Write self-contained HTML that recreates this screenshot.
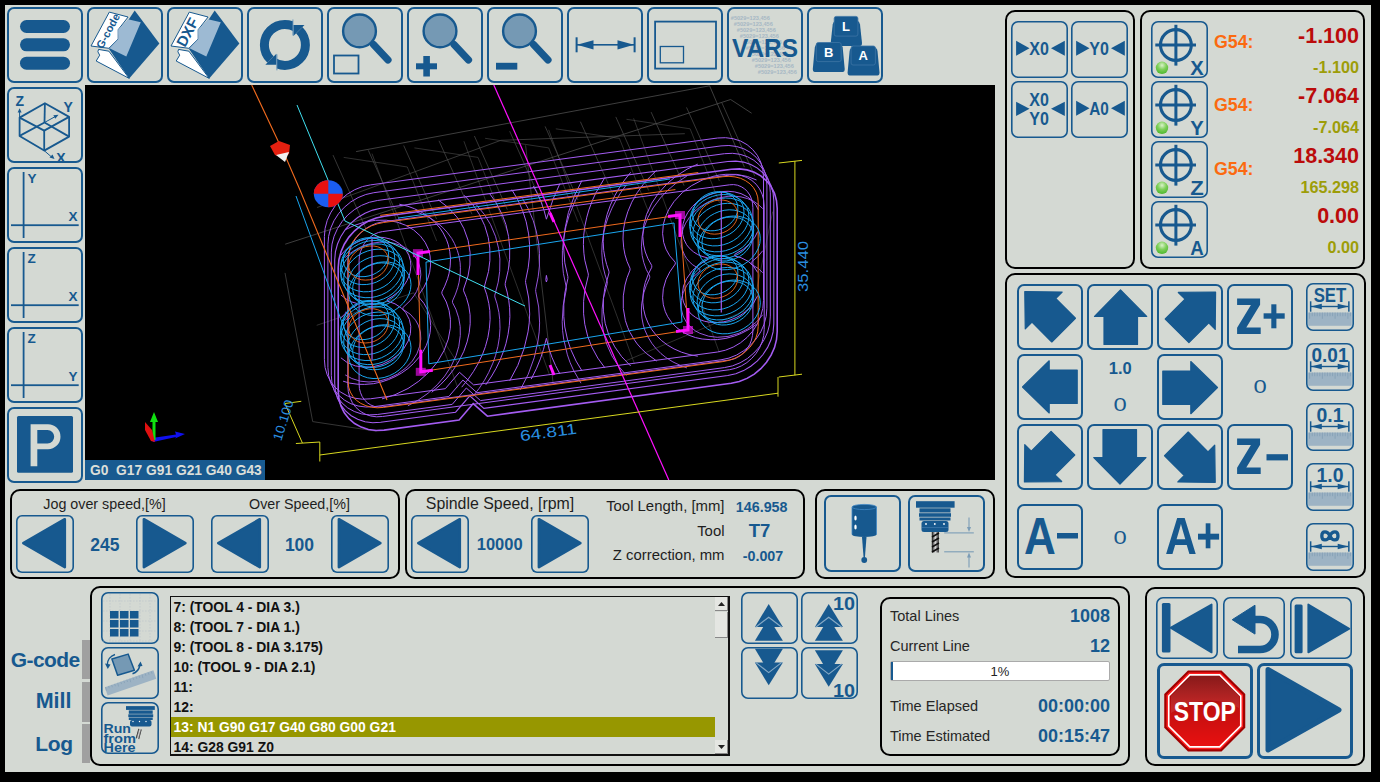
<!DOCTYPE html>
<html><head><meta charset="utf-8"><style>
html,body{margin:0;padding:0;background:#000;width:1380px;height:782px;overflow:hidden}
#main{position:absolute;left:5px;top:5px;width:1366px;height:767px;background:#d4d9d3;overflow:hidden}
#root{position:absolute;left:0;top:0;width:1380px;height:782px;font-family:"Liberation Sans",sans-serif}
.b{position:absolute;box-sizing:border-box;border:2px solid #17598f;border-radius:7px}
.t1{border:none;box-shadow:inset 0 0 0 1.6px #17598f}
.p{position:absolute;box-sizing:border-box;border:2px solid #000;border-radius:10px}
.t{position:absolute;white-space:nowrap}
#vp{position:absolute;left:85px;top:85px;width:910px;height:395px;background:#000}
svg{position:absolute;overflow:visible}
</style></head><body>
<div id="main"></div>
<div id="root">
<div class="b" style="left:7px;top:7px;width:76px;height:76px;"></div>
<div class="b" style="left:87px;top:7px;width:76px;height:76px;"></div>
<div class="b" style="left:167px;top:7px;width:76px;height:76px;"></div>
<div class="b" style="left:247px;top:7px;width:76px;height:76px;"></div>
<div class="b" style="left:327px;top:7px;width:76px;height:76px;"></div>
<div class="b" style="left:407px;top:7px;width:76px;height:76px;"></div>
<div class="b" style="left:487px;top:7px;width:76px;height:76px;"></div>
<div class="b" style="left:567px;top:7px;width:76px;height:76px;"></div>
<div class="b" style="left:647px;top:7px;width:76px;height:76px;"></div>
<div class="b" style="left:727px;top:7px;width:76px;height:76px;"></div>
<div class="b" style="left:807px;top:7px;width:76px;height:76px;"></div>
<div class="b" style="left:7px;top:87px;width:76px;height:76px;"></div>
<div class="b" style="left:7px;top:167px;width:76px;height:76px;"></div>
<div class="b" style="left:7px;top:247px;width:76px;height:76px;"></div>
<div class="b" style="left:7px;top:327px;width:76px;height:76px;"></div>
<div class="b" style="left:7px;top:407px;width:76px;height:76px;"></div>
<svg style="left:7px;top:7px;" width="76" height="76" viewBox="0 0 76 76"><g fill="#17598f"><rect x="13" y="13" width="50" height="13" rx="6.5"/><rect x="13" y="31.3" width="50" height="13" rx="6.5"/><rect x="13" y="49.7" width="50" height="13" rx="6.5"/></g></svg>
<svg style="left:86px;top:7px;" width="76" height="76" viewBox="0 0 76 76"><polygon points="48.7,3.6 73.4,36.6 43.2,71.4 23,41.9" fill="#17598f"/><polygon points="10.2,54 13.7,48.2 11.9,44.8 12.5,42.4 22.9,44.2 43.2,71.4" fill="#fff" stroke="#17598f" stroke-width="1"/><polygon points="5,39 23.3,5.1 42.1,10 32.2,22.7 32.2,32 22.9,41.3" fill="#fff" stroke="#17598f" stroke-width="1"/><polygon points="42,12.3 54.8,15.2 40.3,49.4 23.5,41.3 32.2,32 32.2,22.7" fill="#9dbad3"/><text x="16.5" y="42.5" transform="rotate(-62 16.5 42.5)" font-family="Liberation Sans" font-weight="bold" font-size="11" fill="#17598f">G-code</text></svg>
<svg style="left:166px;top:7px;" width="76" height="76" viewBox="0 0 76 76"><polygon points="48.7,3.6 73.4,36.6 43.2,71.4 23,41.9" fill="#17598f"/><polygon points="10.2,54 13.7,48.2 11.9,44.8 12.5,42.4 22.9,44.2 43.2,71.4" fill="#fff" stroke="#17598f" stroke-width="1"/><polygon points="5,39 23.3,5.1 42.1,10 32.2,22.7 32.2,32 22.9,41.3" fill="#fff" stroke="#17598f" stroke-width="1"/><polygon points="42,12.3 54.8,15.2 40.3,49.4 23.5,41.3 32.2,32 32.2,22.7" fill="#9dbad3"/><text x="19" y="41" transform="rotate(-62 19 41)" font-family="Liberation Sans" font-weight="bold" font-size="15" fill="#17598f">DXF</text></svg>
<svg style="left:247px;top:7px;" width="76" height="76" viewBox="0 0 76 76"><defs><clipPath id="cl"><polygon points="-10,-10 46,-10 46,37.9 38.2,37.9 -10,86.1"/></clipPath><clipPath id="cr"><polygon points="85.5,-10 100,-10 100,100 29.8,100 29.8,37.9 46,37.9 46,29.5"/></clipPath></defs><circle cx="37.9" cy="37.9" r="20.5" fill="none" stroke="#17598f" stroke-width="9" clip-path="url(#cl)"/><circle cx="37.9" cy="37.9" r="20.5" fill="none" stroke="#17598f" stroke-width="9" clip-path="url(#cr)"/><polygon points="46.4,18 57.5,18 46.4,29.1" fill="#17598f"/><polygon points="29.4,57.8 18.3,57.8 29.4,46.7" fill="#17598f"/><line x1="45.9" y1="12.5" x2="45.9" y2="28.5" stroke="#5f8fb8" stroke-width="0.9"/><line x1="29.9" y1="47.3" x2="29.9" y2="63.3" stroke="#5f8fb8" stroke-width="0.9"/></svg>
<svg style="left:327px;top:7px;" width="76" height="76" viewBox="0 0 76 76"><circle cx="32.5" cy="23.9" r="16.4" fill="#7599b4" stroke="#17598f" stroke-width="2.4"/><line x1="46.5" y1="37.599999999999994" x2="61.0" y2="52.9" stroke="#17598f" stroke-width="7.2" stroke-linecap="round"/><rect x="7" y="48.5" width="24.5" height="18" fill="none" stroke="#17598f" stroke-width="1.8"/></svg>
<svg style="left:407px;top:7px;" width="76" height="76" viewBox="0 0 76 76"><circle cx="33" cy="23.9" r="16.4" fill="#7599b4" stroke="#17598f" stroke-width="2.4"/><line x1="47" y1="37.599999999999994" x2="61.5" y2="52.9" stroke="#17598f" stroke-width="7.2" stroke-linecap="round"/><rect x="9" y="56.3" width="21" height="6" fill="#17598f"/><rect x="16.3" y="49" width="6.6" height="20.5" fill="#17598f"/></svg>
<svg style="left:487px;top:7px;" width="76" height="76" viewBox="0 0 76 76"><circle cx="32.5" cy="23.9" r="16.4" fill="#7599b4" stroke="#17598f" stroke-width="2.4"/><line x1="46.5" y1="37.599999999999994" x2="61.0" y2="52.9" stroke="#17598f" stroke-width="7.2" stroke-linecap="round"/><rect x="9" y="55.8" width="21.3" height="6.8" fill="#17598f"/></svg>
<svg style="left:567px;top:7px;" width="76" height="76" viewBox="0 0 76 76"><g fill="#17598f"><rect x="8.6" y="30.3" width="2" height="15"/><rect x="66.6" y="30.3" width="2" height="15"/><rect x="10" y="37" width="57" height="1.6"/><polygon points="10,37.8 26.5,33.2 26.5,42.4"/><polygon points="67,37.8 50.5,33.2 50.5,42.4"/></g></svg>
<svg style="left:647px;top:7px;" width="76" height="76" viewBox="0 0 76 76"><rect x="8.1" y="14.6" width="60.9" height="47" fill="none" stroke="#17598f" stroke-width="1.8"/><rect x="13.3" y="39.5" width="23.2" height="16.3" fill="none" stroke="#17598f" stroke-width="1.3"/></svg>
<svg style="left:727px;top:7px;" width="76" height="76" viewBox="0 0 76 76"><text x="3.8" y="12.5" font-size="6" font-weight="bold" fill="#a6b7c4" font-family="Liberation Sans" textLength="39" lengthAdjust="spacingAndGlyphs">#5029=123,456</text><text x="6.8" y="18.55" font-size="6" font-weight="bold" fill="#a6b7c4" font-family="Liberation Sans" textLength="39" lengthAdjust="spacingAndGlyphs">#5029=123,456</text><text x="9.8" y="24.6" font-size="6" font-weight="bold" fill="#a6b7c4" font-family="Liberation Sans" textLength="39" lengthAdjust="spacingAndGlyphs">#5029=123,456</text><text x="12.8" y="30.65" font-size="6" font-weight="bold" fill="#a6b7c4" font-family="Liberation Sans" textLength="39" lengthAdjust="spacingAndGlyphs">#5029=123,456</text><text x="15.8" y="36.7" font-size="6" font-weight="bold" fill="#a6b7c4" font-family="Liberation Sans" textLength="39" lengthAdjust="spacingAndGlyphs">#5029=123,456</text><text x="18.8" y="42.75" font-size="6" font-weight="bold" fill="#a6b7c4" font-family="Liberation Sans" textLength="39" lengthAdjust="spacingAndGlyphs">#5029=123,456</text><text x="21.8" y="48.8" font-size="6" font-weight="bold" fill="#a6b7c4" font-family="Liberation Sans" textLength="39" lengthAdjust="spacingAndGlyphs">#5029=123,456</text><text x="24.8" y="54.85" font-size="6" font-weight="bold" fill="#a6b7c4" font-family="Liberation Sans" textLength="39" lengthAdjust="spacingAndGlyphs">#5029=123,456</text><text x="27.8" y="60.9" font-size="6" font-weight="bold" fill="#a6b7c4" font-family="Liberation Sans" textLength="39" lengthAdjust="spacingAndGlyphs">#5029=123,456</text><text x="30.8" y="66.94999999999999" font-size="6" font-weight="bold" fill="#a6b7c4" font-family="Liberation Sans" textLength="39" lengthAdjust="spacingAndGlyphs">#5029=123,456</text><text x="38" y="50" text-anchor="middle" font-family="Liberation Sans" font-weight="bold" font-size="25" fill="#17598f" textLength="66" lengthAdjust="spacingAndGlyphs">VARS</text></svg>
<svg style="left:807px;top:7px;" width="76" height="76" viewBox="0 0 76 76"><path d="M25.7,39 L53,39 Q55,39 55,36 L53,17.4 Q52,13.4 49,13.4 L29.7,13.4 Q26.7,13.4 25.7,17.4 L23.7,36 Q23.7,39 25.7,39 Z" fill="#17598f"/><rect x="27.2" y="9.4" width="23.7" height="19.700000000000003" rx="2" fill="#17598f" stroke="#3d75a5" stroke-width="0.8"/><text x="39.05" y="23.75" text-anchor="middle" font-family="Liberation Sans" font-weight="bold" font-size="13" fill="#fff">L</text><path d="M7.8,65 L35.7,65 Q37.7,65 37.7,62 L35.7,40.6 Q34.7,36.6 31.700000000000003,36.6 L11.8,36.6 Q8.8,36.6 7.8,40.6 L5.8,62 Q5.8,65 7.8,65 Z" fill="#17598f"/><rect x="9.3" y="35.5" width="24.900000000000002" height="19.1" rx="2" fill="#17598f" stroke="#3d75a5" stroke-width="0.8"/><text x="21.75" y="49.55" text-anchor="middle" font-family="Liberation Sans" font-weight="bold" font-size="13" fill="#fff">B</text><path d="M42.6,68.5 L70.5,68.5 Q72.5,68.5 72.5,65.5 L70.5,44.1 Q69.5,40.1 66.5,40.1 L46.6,40.1 Q43.6,40.1 42.6,44.1 L40.6,65.5 Q40.6,68.5 42.6,68.5 Z" fill="#17598f"/><rect x="44.1" y="39" width="24.300000000000004" height="19" rx="2" fill="#17598f" stroke="#3d75a5" stroke-width="0.8"/><text x="56.25" y="53.0" text-anchor="middle" font-family="Liberation Sans" font-weight="bold" font-size="13" fill="#fff">A</text></svg>
<svg style="left:7px;top:87px;" width="76" height="76" viewBox="0 0 76 76"><g fill="none" stroke="#17598f" stroke-width="1.8" stroke-linejoin="round"><polygon points="37.9,16.2 62.1,29.9 62.1,49.6 37.2,63.6 12.6,48.9 12.6,30.6"/><polyline points="12.6,30.6 37.2,43.6 62.1,29.9"/><polyline points="12.6,48.9 37.5,35.5 62.1,49.6"/><line x1="37.9" y1="16.2" x2="37.5" y2="35.5"/><line x1="37.2" y1="43.6" x2="37.2" y2="63.6"/><line x1="12.6" y1="30.6" x2="12.6" y2="24" stroke-width="1"/><line x1="37.5" y1="35.5" x2="48" y2="29.7" stroke-width="1"/><line x1="37.2" y1="63.6" x2="44" y2="69.5" stroke-width="1"/></g><g fill="#17598f"><polygon points="12.6,21.3 10.6,25.5 14.6,25.5"/><polygon points="51.5,27.8 46.3,28.2 48.3,31.8"/><polygon points="47.5,72 45.5,67.5 42.5,70.5"/></g><g font-family="Liberation Sans" font-weight="bold" font-size="14" fill="#17598f"><text x="8.5" y="19">Z</text><text x="56.5" y="24.6">Y</text><text x="49.3" y="75.7">X</text></g></svg>
<svg style="left:7px;top:167px;" width="76" height="76" viewBox="0 0 76 76"><g fill="#17598f"><rect x="15.7" y="5" width="1.8" height="66"/><rect x="4" y="57.3" width="67.7" height="1.8"/></g><g font-family="Liberation Sans" font-weight="bold" font-size="13.5" fill="#17598f"><text x="20.5" y="15.8">Y</text><text x="61.5" y="53.9">X</text></g></svg>
<svg style="left:7px;top:247px;" width="76" height="76" viewBox="0 0 76 76"><g fill="#17598f"><rect x="15.7" y="5" width="1.8" height="66"/><rect x="4" y="57.3" width="67.7" height="1.8"/></g><g font-family="Liberation Sans" font-weight="bold" font-size="13.5" fill="#17598f"><text x="20.5" y="15.8">Z</text><text x="61.5" y="53.9">X</text></g></svg>
<svg style="left:7px;top:327px;" width="76" height="76" viewBox="0 0 76 76"><g fill="#17598f"><rect x="15.7" y="5" width="1.8" height="66"/><rect x="4" y="57.3" width="67.7" height="1.8"/></g><g font-family="Liberation Sans" font-weight="bold" font-size="13.5" fill="#17598f"><text x="20.5" y="15.8">Z</text><text x="61.5" y="53.9">Y</text></g></svg>
<svg style="left:7px;top:407px;" width="76" height="76" viewBox="0 0 76 76"><rect x="10" y="9" width="56" height="56.7" rx="1.5" fill="#17598f"/><path d="M23.6,59.2 V17.2 H41 A 12.5 12.5 0 0 1 41,42.2 H30.3 V59.2 Z M30.3,23 V36.4 H40.5 A 6.7 6.7 0 0 0 40.5,23 Z" fill="#d4d9d3" fill-rule="evenodd"/></svg>
<div id="vp"><svg width="910" height="395" viewBox="85 85 910 395" style="left:0;top:0;overflow:hidden"><polyline points="285.2,244.2 730.6,99.5 751.6,113.2" fill="none" stroke="#4e4e4e" stroke-width="0.8" /><polyline points="356.1,151.6 709.6,85.8 744.4,167.1" fill="none" stroke="#4e4e4e" stroke-width="0.8" /><polyline points="317.1,207.5 500.9,140.3 684.8,133.7" fill="none" stroke="#4e4e4e" stroke-width="0.7" /><polyline points="333.0,155.1 365.9,228.6" fill="none" stroke="#4e4e4e" stroke-width="0.7" /><polyline points="368.3,150.3 401.3,223.9" fill="none" stroke="#4e4e4e" stroke-width="0.7" /><polyline points="403.7,145.5 436.6,219.1" fill="none" stroke="#4e4e4e" stroke-width="0.7" /><polyline points="439.0,140.8 472.0,214.3" fill="none" stroke="#4e4e4e" stroke-width="0.7" /><polyline points="474.4,136.0 507.3,209.6" fill="none" stroke="#4e4e4e" stroke-width="0.7" /><polyline points="509.7,131.2 542.7,204.8" fill="none" stroke="#4e4e4e" stroke-width="0.7" /><polyline points="545.1,126.4 578.0,200.0" fill="none" stroke="#4e4e4e" stroke-width="0.7" /><polyline points="580.4,121.7 613.4,195.3" fill="none" stroke="#4e4e4e" stroke-width="0.7" /><polyline points="615.8,116.9 648.7,190.5" fill="none" stroke="#4e4e4e" stroke-width="0.7" /><polyline points="651.1,112.1 684.1,185.7" fill="none" stroke="#4e4e4e" stroke-width="0.7" /><polyline points="686.5,107.4 719.4,180.9" fill="none" stroke="#4e4e4e" stroke-width="0.7" /><polyline points="721.8,102.6 754.8,176.2" fill="none" stroke="#4e4e4e" stroke-width="0.7" /><polyline points="343.7,157.4 407.3,167.0 436.7,241.0" fill="none" stroke="#4e4e4e" stroke-width="0.6" /><polyline points="414.4,147.9 478.0,157.4 507.4,231.5" fill="none" stroke="#4e4e4e" stroke-width="0.6" /><polyline points="485.1,138.3 548.7,147.9 578.1,221.9" fill="none" stroke="#4e4e4e" stroke-width="0.6" /><polyline points="555.8,128.8 619.4,138.4 648.8,212.4" fill="none" stroke="#4e4e4e" stroke-width="0.6" /><polyline points="626.5,119.3 690.1,128.8 719.5,202.9" fill="none" stroke="#4e4e4e" stroke-width="0.6" /><polyline points="372.0,153.6 457.8,387.7" fill="none" stroke="#4e4e4e" stroke-width="0.6" /><polyline points="463.9,141.2 549.7,375.3" fill="none" stroke="#4e4e4e" stroke-width="0.6" /><polyline points="548.7,129.8 634.5,363.9" fill="none" stroke="#4e4e4e" stroke-width="0.6" /><polyline points="633.6,118.3 719.3,352.4" fill="none" stroke="#4e4e4e" stroke-width="0.6" /><polyline points="285.0,272.9 312.7,421.6 376.4,431.2" fill="none" stroke="#4e4e4e" stroke-width="0.7" /><polyline points="525.6,145.3 553.1,383.1" fill="none" stroke="#4e4e4e" stroke-width="0.7" /><polyline points="316.7,325.3 413.6,292.8 457.8,363.5" fill="none" stroke="#4e4e4e" stroke-width="0.6" /><polyline points="625.7,360.9 753.0,307.5 772.7,211.6" fill="none" stroke="#4e4e4e" stroke-width="0.6" /><path d="M757.7,295.6L753.4,303.3L750.2,307.3L745.8,311.5L741.0,314.9L736.7,317.4L728.1,320.8L723.7,321.8L717.3,322.6L708.6,322.1L704.3,321.2L699.6,319.5L695.6,317.4L691.3,314.2L686.6,308.8L683.5,302.1L682.7,298.6L682.4,293.3L683.5,286.0L686.7,278.5L692.4,270.6L699.6,264.3L707.8,259.6L707.6,257.9L702.1,256.4L697.8,254.6L693.5,251.9L689.1,247.9L686.6,244.7L684.1,239.7L682.7,234.5L682.4,229.2L683.1,223.8L684.8,218.2L687.8,212.5L692.4,206.5L696.8,202.3L702.1,198.6L708.6,195.2L715.1,192.9L721.6,191.6L728.1,191.3L734.6,191.9L741.0,193.6L747.5,196.9L751.9,200.3L755.9,205.1L758.4,209.9M340.9,255.1L345.2,250.3L349.6,246.7L353.9,243.9L360.4,240.7L366.9,238.6L373.3,237.4L379.8,237.2L384.2,237.6L390.6,239.1L395.0,240.9L399.3,243.5L403.7,247.2L406.2,250.5L408.9,255.4L410.4,260.6L410.9,265.8L410.3,271.3L409.4,275.0L407.0,280.6L404.6,284.5L401.5,288.5L397.1,292.8L392.8,296.1L387.3,299.3L387.3,301.1L395.0,303.8L401.5,308.1L405.9,312.8L409.4,319.5L410.8,326.4L410.4,333.6L408.2,341.0L403.7,348.7L398.1,354.8L390.6,360.3L382.0,364.5L373.3,366.7L364.7,367.3L355.3,365.9L347.4,362.7L340.9,357.8M757.7,272.5L753.4,265.9L748.1,261.3L741.0,257.7L734.7,256.0L734.9,254.2L743.2,249.4L749.7,243.7L754.8,237.3L757.7,231.5M340.9,295.0L347.4,299.9L351.7,301.9L356.7,303.4L356.7,305.2L351.7,308.1L347.4,311.3L340.9,317.9" fill="none" stroke="#a45cf2" stroke-width="1.0"/><path d="M756.6,324.2L749.7,329.0L741.3,333.4L734.6,336.0L725.9,338.4L717.3,339.6L710.8,339.7L702.1,339.0L695.6,337.6L689.1,335.3L682.6,332.0L677.0,327.9L671.8,322.7L667.7,316.7L665.3,311.6L663.3,304.8L662.6,297.8L663.3,288.8L666.0,279.5L669.8,271.9L675.3,264.0L675.2,262.2L669.7,255.8L666.0,249.2L663.7,242.4L662.6,233.7L663.3,224.7L665.3,217.3L668.7,209.7L674.0,201.6L682.6,192.3L691.3,185.8L702.1,180.1L712.9,176.4L719.4,175.0L725.9,174.3L736.7,174.4L747.5,176.5L756.5,180.0M345.2,229.8L353.9,225.6L364.7,222.0L375.5,220.3L386.3,220.2L397.1,222.1L405.8,225.3L413.6,229.9L420.5,236.1L425.2,242.5L428.4,249.2L430.1,256.1L430.6,265.0L429.7,272.2L427.5,279.6L423.9,287.2L418.6,295.1L418.6,296.9L423.9,303.3L427.5,309.9L429.7,316.7L430.7,325.5L430.1,332.7L428.9,338.2L426.2,345.7L423.1,351.4L419.0,357.3L413.6,363.4L408.0,368.5L401.5,373.1L395.0,376.7L388.5,379.6L382.0,381.8L373.3,383.7L364.7,384.4L358.2,384.3L349.6,383.1L343.1,381.2" fill="none" stroke="#a45cf2" stroke-width="1.0"/><path d="M399.3,204.2L408.0,206.3L414.4,208.7L422.5,212.7L429.1,217.1L434.4,221.7L440.0,228.1L443.2,233.0L446.5,239.7L448.3,244.8L449.8,251.7L450.5,258.7L450.2,265.9L449.1,273.2L447.6,278.7L444.7,286.2L441.9,291.9L441.9,293.7L446.3,302.0L449.1,310.6L450.4,319.3L450.3,328.2L448.3,339.1L444.1,350.4L437.4,362.0L429.1,372.0L418.8,381.2L408.0,388.5L395.0,394.7L382.0,398.9M697.8,356.2L689.1,354.5L681.5,352.2L674.0,348.9L667.5,345.1L661.6,340.6L656.7,335.8L651.7,329.5L648.0,322.9L645.3,316.1L643.6,309.2L642.8,302.2L643.0,295.1L644.0,287.8L645.3,282.3L648.0,274.8L651.8,267.2L651.7,265.4L648.0,258.8L645.3,252.0L643.6,245.1L642.8,236.3L643.6,225.5L646.5,214.5L651.8,203.1L658.4,193.3L667.5,183.3L676.2,176.1L687.0,169.2L697.8,164.1" fill="none" stroke="#a45cf2" stroke-width="1.0"/><path d="M438.2,199.8L448.1,207.4L456.8,216.9L460.2,221.8L463.8,228.4L468.1,240.3L470.1,252.5L469.9,265.0L468.0,276.0L463.6,289.0L463.6,290.8L466.4,297.5L468.8,306.1L470.1,314.8L470.2,323.7L469.2,332.8L467.1,341.9L463.8,351.3L459.1,360.8L453.4,369.8L446.9,378.0L440.4,384.8L431.7,392.3M656.7,361.0L646.3,353.4L641.4,348.7L637.2,343.9L633.8,339.0L630.0,332.4L627.7,327.4L625.4,320.6L623.3,308.4L623.3,295.9L625.0,285.0L627.1,277.6L630.0,270.1L630.0,268.3L627.1,261.6L625.0,254.8L623.7,247.8L623.0,239.0L623.4,230.0L625.0,220.9L627.8,211.7L631.8,202.2L637.2,192.7L643.0,184.7L650.1,176.6L656.7,170.3" fill="none" stroke="#a45cf2" stroke-width="1.0"/><path d="M630.7,366.0L621.7,356.7L614.8,346.9L608.9,335.3L605.2,323.3L603.4,311.1L603.4,298.6L604.9,287.7L609.0,272.9L608.9,271.2L606.6,264.4L604.9,257.5L603.7,250.5L603.2,241.7L603.6,232.7L604.9,223.7L607.1,214.4L610.4,205.1L614.8,195.6L619.2,187.9L624.6,180.0L630.7,172.3M461.7,387.2L468.2,379.2L473.6,371.3L478.1,363.6L482.6,354.1L485.4,346.6L487.9,337.4L489.4,328.2L490.1,319.3L489.8,310.4L488.8,303.4L486.8,294.8L484.5,288.0L484.5,286.2L488.5,271.4L489.9,260.5L489.8,248.1L488.3,237.6L484.7,225.6L479.3,214.3L472.4,204.1L464.2,195.3" fill="none" stroke="#a45cf2" stroke-width="1.0"/><path d="M489.2,193.0L496.1,202.7L502.1,214.4L505.9,224.5L508.6,236.6L509.7,247.2L509.6,259.7L508.2,270.5L505.2,283.4L505.2,285.2L507.1,292.0L508.8,300.7L509.6,307.7L509.9,316.6L509.3,325.6L508.0,334.6L505.9,343.8L503.5,351.3L499.8,360.7L496.1,368.3L491.7,376.0L485.8,384.8M604.9,367.9L597.8,358.1L591.8,347.0L587.7,336.3L584.8,324.3L583.6,313.8L583.6,301.3L584.8,290.4L588.3,275.7L588.3,274.0L584.8,260.2L583.9,253.2L583.4,244.4L583.7,235.4L584.8,226.4L586.8,217.2L588.9,209.8L592.4,200.4L595.9,192.8L604.9,177.4" fill="none" stroke="#a45cf2" stroke-width="1.0"/><path d="M511.8,189.6L517.8,199.8L522.6,210.6L526.2,221.8L528.6,233.9L529.6,244.5L529.4,257.0L528.2,267.8L525.6,280.6L525.6,282.4L528.7,298.0L529.7,313.9L529.2,322.9L528.0,331.9L524.1,348.5L517.8,365.4L509.6,380.9M582.0,370.9L576.1,361.1L570.7,349.3L567.4,339.1L564.8,327.0L563.8,316.4L563.8,304.0L564.8,293.1L567.9,278.5L567.9,276.7L564.8,262.9L563.6,247.0L563.9,238.1L564.9,229.1L568.4,212.5L574.4,195.7L582.0,180.4" fill="none" stroke="#a45cf2" stroke-width="1.0"/><path d="M559.9,373.9L555.6,365.6L551.9,357.2L549.0,348.7L546.4,338.3L543.5,349.4L540.4,358.8L536.6,368.2L531.2,379.1M546.4,282.0L545.8,279.7L546.4,275.4L547.2,279.5L546.4,282.0M560.0,183.4L553.3,198.6L546.4,219.2L544.1,210.5L541.1,202.0L537.4,193.6L533.4,186.0" fill="none" stroke="#a45cf2" stroke-width="1.0"/><path d="" fill="none" stroke="#a45cf2" stroke-width="1.0"/><path d="M762.7,314.8L756.2,322.3L747.5,328.9L738.9,333.3L728.0,336.4L717.2,337.3L708.6,336.2L699.9,333.3L695.6,331.0L691.3,327.7L686.7,322.7L683.1,316.0L681.3,309.1L681.3,300.2L683.1,292.9L686.8,285.3L692.8,277.3L700.0,271.0L699.9,269.3L692.8,264.9L689.4,261.8L686.7,258.6L684.7,255.3L682.5,250.2L681.6,246.8L681.0,241.5L681.6,234.3L683.1,228.8L685.7,223.1L689.5,217.3L694.9,211.2L699.9,207.0L706.4,202.9L712.9,199.9L719.4,197.8L728.0,196.3L734.5,196.2L741.0,196.9L747.5,198.6L753.8,201.4L758.3,204.5L762.7,208.6M345.2,257.5L349.5,253.8L355.3,249.9L360.3,247.2L366.8,244.7L373.3,243.0L379.8,242.2L386.3,242.1L392.9,243.0L399.3,244.9L403.7,246.9L408.4,249.8L413.4,254.5L416.9,259.4L419.1,264.4L420.4,269.6L420.8,274.9L419.5,283.9L416.6,291.5L414.3,295.3L410.1,300.8L402.9,307.6L402.9,309.3L410.1,314.1L415.5,320.1L418.3,325.1L420.4,331.9L420.8,339.0L419.7,346.2L416.9,353.7L412.3,361.1L405.8,368.0L397.3,374.2L388.5,378.4L379.8,380.9L369.0,382.0L360.3,381.2L351.8,378.5L345.2,374.9M762.7,272.7L758.3,268.5L751.1,264.1L751.2,262.3L758.3,256.1L762.7,250.7M345.2,312.0L349.7,314.7L349.7,316.5L345.2,320.4" fill="none" stroke="#a45cf2" stroke-width="0.9"/><path d="M416.6,212.0L423.1,214.5L430.6,218.3L437.2,222.8L442.5,227.3L447.1,232.2L451.8,238.6L454.5,243.6L457.3,250.4L458.8,255.5L460.1,262.4L460.4,267.7L460.2,274.9L459.1,282.2L457.7,287.7L455.5,294.1L452.5,300.9L452.5,302.6L455.9,309.3L458.7,317.8L460.2,326.5L460.3,335.4L458.8,346.3L456.1,355.6L451.2,366.1L444.7,376.1L437.2,384.8L428.1,393.2L418.7,399.8L407.9,405.8M686.9,367.9L680.5,365.5L672.9,361.9L665.9,357.5L661.0,353.6L655.7,348.2L651.9,343.4L647.9,336.8L644.9,330.1L643.3,325.0L641.9,318.0L641.4,311.0L641.7,303.8L643.8,292.8L646.3,285.4L649.7,277.8L649.7,276.0L646.2,269.4L643.8,262.6L642.2,255.7L641.4,246.9L642.2,236.1L644.3,226.9L647.9,217.5L653.1,207.9L660.4,198.0L667.5,190.5L676.1,183.1L686.9,176.0" fill="none" stroke="#a45cf2" stroke-width="0.9"/><path d="M476.5,205.0L484.5,214.6L490.5,224.5L495.5,236.3L498.6,248.3L499.9,258.9L499.7,271.3L498.2,282.2L494.8,295.2L494.8,296.9L497.0,303.8L498.9,312.4L499.7,319.4L500.0,328.3L499.4,337.3L497.9,346.4L495.5,355.6L492.9,363.1L488.7,372.5L484.5,380.2L479.3,388.2L472.8,396.6M626.4,375.4L618.2,365.7L611.9,355.9L606.7,344.1L603.4,332.1L602.0,321.6L602.1,309.2L603.4,298.3L607.3,283.5L607.3,281.7L605.1,274.9L603.4,268.0L602.4,261.1L601.8,252.2L602.2,243.3L603.4,234.2L605.6,225.0L608.0,217.6L612.0,208.1L615.9,200.5L620.7,192.7L626.4,184.8" fill="none" stroke="#a45cf2" stroke-width="0.9"/><path d="M522.6,198.7L528.2,208.7L533.2,220.5L536.2,230.8L538.6,243.0L539.5,253.5L539.4,266.0L538.2,276.8L535.7,289.6L535.7,291.4L538.7,307.0L539.6,322.9L539.2,331.9L538.0,340.9L534.3,357.5L528.2,374.3L520.4,389.7M581.0,383.2L573.4,370.0L570.1,362.6L567.4,354.8L563.7,339.3L562.6,330.5L562.2,321.7L563.2,305.5L566.4,289.1L566.3,287.3L563.4,273.4L562.4,262.9L562.4,250.4L563.5,239.6L565.9,226.8L569.1,215.7L574.3,202.5L580.0,191.1" fill="none" stroke="#a45cf2" stroke-width="0.9"/><path d="" fill="none" stroke="#a45cf2" stroke-width="0.9"/><polygon points="731.3,383.3 739.3,381.5 747.0,378.4 754.3,374.1 760.8,368.7 766.5,362.3 771.1,355.2 774.5,347.6 776.5,339.7 777.2,331.7 777.2,208.4 776.5,200.7 774.5,193.3 771.1,186.6 766.5,180.8 760.8,175.9 754.3,172.3 747.0,169.9 739.3,168.9 731.3,169.3 384.1,216.2 376.2,217.9 368.4,221.0 361.2,225.3 354.6,230.8 348.9,237.1 344.3,244.2 341.0,251.8 338.9,259.7 338.2,267.7 338.2,391.0 338.9,398.8 341.0,406.1 344.3,412.8 348.9,418.7 354.6,423.5 361.2,427.1 368.4,429.5 376.2,430.5 384.1,430.1 459.1,420.0 473.2,403.6 487.4,416.2" fill="none" stroke="#a45cf2" stroke-width="1.6" /><polygon points="727.8,375.5 735.8,373.7 743.6,370.6 750.8,366.3 757.4,360.9 763.0,354.5 767.6,347.4 771.0,339.8 773.1,331.9 773.8,323.9 773.8,200.6 773.1,192.9 771.0,185.5 767.6,178.8 763.0,172.9 757.4,168.1 750.8,164.5 743.6,162.1 735.8,161.1 727.8,161.5 380.7,208.3 372.7,210.1 365.0,213.2 357.7,217.5 351.2,222.9 345.5,229.3 340.9,236.4 337.5,244.0 335.4,251.9 334.7,259.9 334.7,383.2 335.4,390.9 337.5,398.3 340.9,405.0 345.5,410.9 351.2,415.7 357.7,419.3 365.0,421.7 372.7,422.7 380.7,422.3 455.6,412.2 469.8,395.8 483.9,408.4" fill="none" stroke="#a45cf2" stroke-width="1.1" /><polygon points="724.4,367.6 732.4,365.9 740.1,362.8 747.4,358.5 753.9,353.0 759.6,346.7 764.2,339.6 767.6,332.0 769.7,324.1 770.3,316.1 770.3,192.8 769.7,185.0 767.6,177.7 764.2,171.0 759.6,165.1 753.9,160.3 747.4,156.7 740.1,154.3 732.4,153.3 724.4,153.7 377.3,200.5 369.3,202.3 361.5,205.4 354.3,209.7 347.7,215.1 342.1,221.5 337.5,228.6 334.1,236.2 332.0,244.1 331.3,252.1 331.3,375.3 332.0,383.1 334.1,390.5 337.5,397.2 342.1,403.0 347.7,407.9 354.3,411.5 361.5,413.9 369.3,414.9 377.3,414.5 452.2,404.4 466.3,388.0 480.5,400.6" fill="none" stroke="#a45cf2" stroke-width="1.0" /><polygon points="721.0,359.8 728.9,358.1 736.7,355.0 743.9,350.6 750.5,345.2 756.2,338.9 760.8,331.8 764.1,324.2 766.2,316.3 766.9,308.3 766.9,185.0 766.2,177.2 764.1,169.9 760.8,163.2 756.2,157.3 750.5,152.5 743.9,148.8 736.7,146.5 728.9,145.5 721.0,145.9 373.8,192.7 365.8,194.5 358.1,197.6 350.8,201.9 344.3,207.3 338.6,213.6 334.0,220.7 330.6,228.4 328.6,236.3 327.9,244.2 327.9,367.5 328.6,375.3 330.6,382.7 334.0,389.4 338.6,395.2 344.3,400.0 350.8,403.7 358.1,406.0 365.8,407.0 373.8,406.7 448.8,396.5 462.9,380.1 477.0,392.7" fill="none" stroke="#a45cf2" stroke-width="1.0" /><polygon points="717.5,352.0 725.5,350.2 733.2,347.1 740.5,342.8 747.1,337.4 752.7,331.1 757.3,324.0 760.7,316.3 762.8,308.4 763.5,300.5 763.5,177.2 762.8,169.4 760.7,162.0 757.3,155.3 752.7,149.5 747.1,144.7 740.5,141.0 733.2,138.7 725.5,137.7 717.5,138.0 370.4,184.9 362.4,186.6 354.7,189.7 347.4,194.1 340.8,199.5 335.2,205.8 330.6,212.9 327.2,220.5 325.1,228.4 324.4,236.4 324.4,359.7 325.1,367.5 327.2,374.8 330.6,381.5 335.2,387.4 340.8,392.2 347.4,395.9 354.7,398.2 362.4,399.2 370.4,398.8 445.3,388.7 459.5,372.3 473.6,384.9" fill="none" stroke="#a45cf2" stroke-width="1.0" /><polygon points="729.6,369.7 735.6,368.3 741.4,365.9 746.9,362.6 751.8,358.3 756.1,353.4 759.6,347.8 762.1,341.8 763.7,335.6 764.2,329.4 764.2,206.1 763.7,199.9 762.1,194.2 759.6,188.9 756.1,184.2 751.8,180.4 746.9,177.5 741.4,175.6 735.6,174.8 729.6,175.1 382.4,221.9 376.4,223.3 370.6,225.7 365.1,229.0 360.1,233.3 355.9,238.2 352.4,243.8 349.9,249.8 348.3,256.0 347.8,262.3 347.8,385.6 348.3,391.7 349.9,397.5 352.4,402.8 355.9,407.4 360.1,411.2 365.1,414.1 370.6,416.0 376.4,416.8 382.4,416.5" fill="none" stroke="#a45cf2" stroke-width="1.0" /><polygon points="729.6,360.0 733.6,359.1 737.5,357.4 741.2,355.0 744.6,351.9 747.4,348.3 749.8,344.3 751.5,340.0 752.5,335.4 752.9,330.9 752.9,207.6 752.5,203.1 751.5,198.9 749.8,195.0 747.4,191.6 744.6,188.8 741.2,186.7 737.5,185.2 733.6,184.6 729.6,184.8 382.4,231.6 378.4,232.5 374.4,234.2 370.8,236.6 367.4,239.7 364.5,243.3 362.2,247.3 360.5,251.7 359.4,256.2 359.1,260.7 359.1,384.0 359.4,388.5 360.5,392.7 362.2,396.6 364.5,400.0 367.4,402.8 370.8,405.0 374.4,406.4 378.4,407.0 382.4,406.9" fill="none" stroke="#a45cf2" stroke-width="1.0" /><polygon points="722.9,361.6 729.0,360.3 735.0,358.2 740.6,355.2 745.6,351.5 750.0,347.2 753.5,342.4 756.1,337.3 757.7,331.9 758.2,326.6 758.2,202.1 757.7,196.9 756.1,192.1 753.5,187.7 750.0,183.8 745.6,180.7 740.6,178.3 735.0,176.9 729.0,176.3 722.9,176.7 383.5,222.5 377.4,223.8 371.4,225.9 365.9,228.9 360.8,232.6 356.4,236.9 352.9,241.7 350.3,246.8 348.7,252.1 348.2,257.5 348.2,382.0 348.7,387.1 350.3,392.0 352.9,396.4 356.4,400.3 360.8,403.4 365.9,405.7 371.4,407.2 377.4,407.8 383.5,407.4" fill="none" stroke="#f06a1e" stroke-width="1.0" /><polyline points="380.2,215.4 698.3,172.5" fill="none" stroke="#f06a1e" stroke-width="1.0" /><polyline points="406.7,225.8 675.4,189.6" fill="none" stroke="#f06a1e" stroke-width="1.0" /><polygon points="403.1,329.5 402.6,324.8 401.1,320.4 398.7,316.4 395.4,313.0 391.4,310.3 386.7,308.3 381.6,307.1 376.2,306.8 370.6,307.3 365.1,308.7 359.8,310.9 354.9,313.8 350.5,317.4 346.8,321.4 344.0,325.9 342.0,330.7 341.0,335.5 341.0,340.2 342.0,344.8 344.0,349.0 346.8,352.7 350.5,355.8 354.9,358.2 359.8,359.8 365.1,360.5 370.6,360.4 376.2,359.5 381.6,357.7 386.7,355.1 391.4,351.9 395.4,348.0 398.7,343.7 401.1,339.1 402.6,334.3 403.1,329.5" fill="none" stroke="#1aa6f0" stroke-width="1.0" /><polygon points="399.6,325.0 399.2,320.5 397.7,316.3 395.4,312.5 392.3,309.3 388.5,306.6 384.0,304.7 379.1,303.6 373.9,303.3 368.6,303.8 363.3,305.1 358.3,307.2 353.6,310.0 349.4,313.4 345.9,317.3 343.2,321.6 341.3,326.1 340.4,330.7 340.4,335.3 341.3,339.6 343.2,343.6 345.9,347.2 349.4,350.1 353.6,352.4 358.3,353.9 363.3,354.6 368.6,354.5 373.9,353.6 379.1,351.9 384.0,349.4 388.5,346.3 392.3,342.7 395.4,338.6 397.7,334.2 399.2,329.6 399.6,325.0" fill="none" stroke="#1aa6f0" stroke-width="1.0" /><polygon points="394.7,320.7 394.3,316.6 393.0,312.8 390.9,309.4 388.1,306.5 384.6,304.1 380.6,302.4 376.2,301.3 371.5,301.1 366.7,301.5 361.9,302.7 357.3,304.6 353.1,307.1 349.3,310.2 346.1,313.7 343.7,317.6 342.0,321.7 341.1,325.9 341.1,330.0 342.0,333.9 343.7,337.5 346.1,340.7 349.3,343.4 353.1,345.5 357.3,346.8 361.9,347.5 366.7,347.4 371.5,346.6 376.2,345.0 380.6,342.8 384.6,340.0 388.1,336.7 390.9,333.0 393.0,329.0 394.3,324.8 394.7,320.7" fill="none" stroke="#1aa6f0" stroke-width="1.0" /><polygon points="404.5,334.3 404.0,329.7 402.5,325.4 400.2,321.5 397.0,318.2 393.0,315.5 388.5,313.5 383.5,312.4 378.1,312.1 372.7,312.6 367.3,313.9 362.1,316.1 357.3,318.9 353.1,322.4 349.5,326.4 346.7,330.8 344.8,335.4 343.8,340.1 343.8,344.8 344.8,349.2 346.7,353.3 349.5,357.0 353.1,360.0 357.3,362.3 362.1,363.9 367.3,364.6 372.7,364.5 378.1,363.6 383.5,361.8 388.5,359.3 393.0,356.1 397.0,352.4 400.2,348.2 402.5,343.7 404.0,339.0 404.5,334.3" fill="none" stroke="#1aa6f0" stroke-width="1.0" /><polygon points="404.4,339.3 404.0,335.0 402.6,331.0 400.4,327.4 397.4,324.3 393.8,321.8 389.5,320.0 384.9,318.9 379.9,318.6 374.9,319.1 369.8,320.3 365.0,322.3 360.6,325.0 356.6,328.2 353.3,331.9 350.7,336.0 348.9,340.3 348.0,344.7 348.0,349.0 348.9,353.2 350.7,357.0 353.3,360.4 356.6,363.2 360.6,365.3 365.0,366.8 369.8,367.5 374.9,367.4 379.9,366.5 384.9,364.9 389.5,362.5 393.8,359.6 397.4,356.1 400.4,352.2 402.6,348.0 404.0,343.6 404.4,339.3" fill="none" stroke="#1aa6f0" stroke-width="1.0" /><polygon points="403.6,344.3 403.2,340.5 402.0,336.9 400.0,333.7 397.4,330.9 394.1,328.6 390.3,327.0 386.1,326.0 381.6,325.7 377.1,326.2 372.5,327.3 368.2,329.1 364.2,331.5 360.6,334.4 357.6,337.7 355.3,341.4 353.7,345.3 352.8,349.2 352.8,353.1 353.7,356.9 355.3,360.3 357.6,363.3 360.6,365.9 364.2,367.8 368.2,369.1 372.5,369.7 377.1,369.6 381.6,368.9 386.1,367.4 390.3,365.3 394.1,362.6 397.4,359.5 400.0,356.0 402.0,352.2 403.2,348.3 403.6,344.3" fill="none" stroke="#1aa6f0" stroke-width="1.0" /><polygon points="388.6,316.9 388.2,313.5 387.2,310.3 385.4,307.5 383.0,305.0 380.1,303.0 376.7,301.5 373.0,300.7 369.0,300.4 365.0,300.8 360.9,301.8 357.1,303.4 353.5,305.5 350.3,308.1 347.7,311.1 345.6,314.4 344.2,317.8 343.4,321.3 343.4,324.8 344.2,328.1 345.6,331.1 347.7,333.8 350.3,336.1 353.5,337.8 357.1,339.0 360.9,339.5 365.0,339.5 369.0,338.8 373.0,337.4 376.7,335.6 380.1,333.2 383.0,330.4 385.4,327.3 387.2,323.9 388.2,320.4 388.6,316.9" fill="none" stroke="#1aa6f0" stroke-width="1.0" /><polygon points="411.0,347.5 410.5,342.8 409.0,338.4 406.6,334.4 403.3,331.0 399.3,328.3 394.7,326.3 389.5,325.1 384.1,324.8 378.5,325.3 373.0,326.7 367.7,328.9 362.8,331.8 358.4,335.3 354.7,339.4 351.9,343.9 349.9,348.6 348.9,353.5 348.9,358.2 349.9,362.8 351.9,367.0 354.7,370.7 358.4,373.8 362.8,376.2 367.7,377.8 373.0,378.5 378.5,378.4 384.1,377.5 389.5,375.7 394.7,373.1 399.3,369.8 403.3,366.0 406.6,361.7 409.0,357.1 410.5,352.3 411.0,347.5" fill="none" stroke="#1aa6f0" stroke-width="1.0" /><polygon points="388.4,323.2 387.9,319.6 386.5,316.3 384.3,313.5 381.4,311.2 377.8,309.7 373.9,308.8 369.6,308.8 365.4,309.6 361.2,311.1 357.5,313.4 354.2,316.2 351.6,319.4 349.8,323.0 348.9,326.7 348.9,330.3 349.8,333.8 351.6,336.9 354.2,339.4 357.5,341.4 361.2,342.6 365.4,343.0 369.6,342.6 373.9,341.5 377.8,339.6 381.4,337.0 384.3,334.0 386.5,330.5 387.9,326.9 388.4,323.2" fill="none" stroke="#f06a1e" stroke-width="0.9" /><polygon points="403.1,266.6 402.6,261.9 401.1,257.6 398.7,253.6 395.4,250.2 391.4,247.4 386.7,245.4 381.6,244.2 376.2,243.9 370.6,244.4 365.1,245.8 359.8,248.0 354.9,250.9 350.5,254.5 346.8,258.6 344.0,263.1 342.0,267.8 341.0,272.6 341.0,277.4 342.0,281.9 344.0,286.1 346.8,289.9 350.5,292.9 354.9,295.3 359.8,296.9 365.1,297.7 370.6,297.6 376.2,296.6 381.6,294.8 386.7,292.3 391.4,289.0 395.4,285.2 398.7,280.9 401.1,276.2 402.6,271.4 403.1,266.6" fill="none" stroke="#1aa6f0" stroke-width="1.0" /><polygon points="399.6,262.1 399.2,257.7 397.7,253.5 395.4,249.7 392.3,246.4 388.5,243.8 384.0,241.9 379.1,240.8 373.9,240.4 368.6,241.0 363.3,242.3 358.3,244.4 353.6,247.2 349.4,250.6 345.9,254.5 343.2,258.7 341.3,263.2 340.4,267.8 340.4,272.4 341.3,276.7 343.2,280.8 345.9,284.3 349.4,287.2 353.6,289.5 358.3,291.0 363.3,291.8 368.6,291.7 373.9,290.8 379.1,289.0 384.0,286.6 388.5,283.5 392.3,279.8 395.4,275.7 397.7,271.3 399.2,266.7 399.6,262.1" fill="none" stroke="#1aa6f0" stroke-width="1.0" /><polygon points="394.7,257.8 394.3,253.8 393.0,250.0 390.9,246.5 388.1,243.6 384.6,241.2 380.6,239.5 376.2,238.5 371.5,238.2 366.7,238.7 361.9,239.9 357.3,241.7 353.1,244.3 349.3,247.3 346.1,250.9 343.7,254.7 342.0,258.8 341.1,263.0 341.1,267.1 342.0,271.0 343.7,274.7 346.1,277.9 349.3,280.5 353.1,282.6 357.3,284.0 361.9,284.6 366.7,284.5 371.5,283.7 376.2,282.2 380.6,279.9 384.6,277.1 388.1,273.8 390.9,270.1 393.0,266.1 394.3,262.0 394.7,257.8" fill="none" stroke="#1aa6f0" stroke-width="1.0" /><polygon points="404.5,271.4 404.0,266.8 402.5,262.5 400.2,258.7 397.0,255.3 393.0,252.6 388.5,250.7 383.5,249.5 378.1,249.2 372.7,249.7 367.3,251.1 362.1,253.2 357.3,256.1 353.1,259.6 349.5,263.6 346.7,267.9 344.8,272.6 343.8,277.3 343.8,281.9 344.8,286.4 346.7,290.5 349.5,294.1 353.1,297.1 357.3,299.5 362.1,301.0 367.3,301.8 372.7,301.7 378.1,300.7 383.5,299.0 388.5,296.5 393.0,293.3 397.0,289.5 400.2,285.3 402.5,280.8 404.0,276.1 404.5,271.4" fill="none" stroke="#1aa6f0" stroke-width="1.0" /><polygon points="404.4,276.4 404.0,272.1 402.6,268.1 400.4,264.5 397.4,261.4 393.8,258.9 389.5,257.1 384.9,256.0 379.9,255.7 374.9,256.2 369.8,257.5 365.0,259.5 360.6,262.1 356.6,265.4 353.3,269.1 350.7,273.2 348.9,277.5 348.0,281.8 348.0,286.2 348.9,290.3 350.7,294.1 353.3,297.5 356.6,300.3 360.6,302.5 365.0,303.9 369.8,304.6 374.9,304.5 379.9,303.7 384.9,302.0 389.5,299.7 393.8,296.7 397.4,293.2 400.4,289.3 402.6,285.1 404.0,280.8 404.4,276.4" fill="none" stroke="#1aa6f0" stroke-width="1.0" /><polygon points="403.6,281.5 403.2,277.6 402.0,274.0 400.0,270.8 397.4,268.0 394.1,265.7 390.3,264.1 386.1,263.1 381.6,262.9 377.1,263.3 372.5,264.5 368.2,266.2 364.2,268.6 360.6,271.5 357.6,274.9 355.3,278.6 353.7,282.4 352.8,286.4 352.8,290.3 353.7,294.0 355.3,297.4 357.6,300.5 360.6,303.0 364.2,305.0 368.2,306.3 372.5,306.9 377.1,306.8 381.6,306.0 386.1,304.5 390.3,302.4 394.1,299.8 397.4,296.6 400.0,293.1 402.0,289.3 403.2,285.4 403.6,281.5" fill="none" stroke="#1aa6f0" stroke-width="1.0" /><polygon points="388.6,254.1 388.2,250.7 387.2,247.5 385.4,244.6 383.0,242.1 380.1,240.1 376.7,238.7 373.0,237.8 369.0,237.6 365.0,238.0 360.9,239.0 357.1,240.6 353.5,242.7 350.3,245.3 347.7,248.2 345.6,251.5 344.2,254.9 343.4,258.4 343.4,261.9 344.2,265.2 345.6,268.3 347.7,271.0 350.3,273.2 353.5,275.0 357.1,276.1 360.9,276.7 365.0,276.6 369.0,275.9 373.0,274.6 376.7,272.7 380.1,270.4 383.0,267.6 385.4,264.4 387.2,261.1 388.2,257.6 388.6,254.1" fill="none" stroke="#1aa6f0" stroke-width="1.0" /><polygon points="411.0,284.6 410.5,279.9 409.0,275.5 406.6,271.6 403.3,268.2 399.3,265.4 394.7,263.4 389.5,262.2 384.1,261.9 378.5,262.4 373.0,263.8 367.7,266.0 362.8,268.9 358.4,272.5 354.7,276.6 351.9,281.1 349.9,285.8 348.9,290.6 348.9,295.4 349.9,299.9 351.9,304.1 354.7,307.8 358.4,310.9 362.8,313.3 367.7,314.9 373.0,315.7 378.5,315.6 384.1,314.6 389.5,312.8 394.7,310.2 399.3,307.0 403.3,303.1 406.6,298.8 409.0,294.2 410.5,289.4 411.0,284.6" fill="none" stroke="#1aa6f0" stroke-width="1.0" /><polygon points="388.4,260.3 387.9,256.8 386.5,253.5 384.3,250.6 381.4,248.4 377.8,246.8 373.9,246.0 369.6,246.0 365.4,246.7 361.2,248.3 357.5,250.5 354.2,253.3 351.6,256.6 349.8,260.1 348.9,263.8 348.9,267.5 349.8,270.9 351.6,274.0 354.2,276.6 357.5,278.5 361.2,279.7 365.4,280.1 369.6,279.8 373.9,278.6 377.8,276.7 381.4,274.2 384.3,271.1 386.5,267.7 387.9,264.0 388.4,260.3" fill="none" stroke="#f06a1e" stroke-width="0.9" /><polyline points="372.0,359.7 372.0,238.8" fill="none" stroke="#a45cf2" stroke-width="1.2" /><polygon points="752.4,284.8 751.9,280.1 750.4,275.7 748.0,271.7 744.7,268.3 740.7,265.6 736.0,263.6 730.9,262.4 725.4,262.1 719.9,262.6 714.3,264.0 709.0,266.2 704.1,269.1 699.8,272.7 696.1,276.7 693.2,281.2 691.3,285.9 690.3,290.8 690.3,295.5 691.3,300.1 693.2,304.3 696.1,308.0 699.8,311.1 704.1,313.5 709.0,315.1 714.3,315.8 719.9,315.7 725.4,314.8 730.9,313.0 736.0,310.4 740.7,307.1 744.7,303.3 748.0,299.0 750.4,294.4 751.9,289.6 752.4,284.8" fill="none" stroke="#1aa6f0" stroke-width="1.0" /><polygon points="748.9,280.3 748.4,275.8 747.0,271.6 744.7,267.8 741.6,264.6 737.7,261.9 733.3,260.0 728.4,258.9 723.2,258.6 717.9,259.1 712.6,260.4 707.5,262.5 702.8,265.3 698.7,268.7 695.2,272.6 692.4,276.9 690.6,281.4 689.6,286.0 689.6,290.5 690.6,294.9 692.4,298.9 695.2,302.4 698.7,305.4 702.8,307.7 707.5,309.2 712.6,309.9 717.9,309.8 723.2,308.9 728.4,307.2 733.3,304.7 737.7,301.6 741.6,298.0 744.7,293.9 747.0,289.4 748.4,284.9 748.9,280.3" fill="none" stroke="#1aa6f0" stroke-width="1.0" /><polygon points="744.0,276.0 743.6,271.9 742.3,268.1 740.2,264.7 737.4,261.7 733.9,259.4 729.9,257.6 725.4,256.6 720.7,256.3 715.9,256.8 711.2,258.0 706.6,259.9 702.3,262.4 698.6,265.5 695.4,269.0 692.9,272.9 691.2,277.0 690.4,281.1 690.4,285.3 691.2,289.2 692.9,292.8 695.4,296.0 698.6,298.7 702.3,300.8 706.6,302.1 711.2,302.8 715.9,302.7 720.7,301.9 725.4,300.3 729.9,298.1 733.9,295.3 737.4,292.0 740.2,288.3 742.3,284.3 743.6,280.1 744.0,276.0" fill="none" stroke="#1aa6f0" stroke-width="1.0" /><polygon points="753.7,289.6 753.2,285.0 751.8,280.7 749.4,276.8 746.2,273.5 742.3,270.8 737.7,268.8 732.7,267.7 727.4,267.4 722.0,267.9 716.6,269.2 711.4,271.4 706.6,274.2 702.3,277.7 698.7,281.7 695.9,286.1 694.0,290.7 693.0,295.4 693.0,300.1 694.0,304.5 695.9,308.6 698.7,312.3 702.3,315.3 706.6,317.6 711.4,319.2 716.6,319.9 722.0,319.8 727.4,318.9 732.7,317.1 737.7,314.6 742.3,311.4 746.2,307.7 749.4,303.5 751.8,299.0 753.2,294.3 753.7,289.6" fill="none" stroke="#1aa6f0" stroke-width="1.0" /><polygon points="753.7,294.5 753.2,290.3 751.9,286.3 749.7,282.7 746.7,279.6 743.0,277.1 738.8,275.3 734.1,274.2 729.2,273.9 724.1,274.4 719.1,275.6 714.3,277.6 709.8,280.3 705.8,283.5 702.5,287.2 699.9,291.3 698.1,295.6 697.2,300.0 697.2,304.3 698.1,308.5 699.9,312.3 702.5,315.7 705.8,318.5 709.8,320.6 714.3,322.1 719.1,322.8 724.1,322.7 729.2,321.8 734.1,320.2 738.8,317.8 743.0,314.9 746.7,311.4 749.7,307.5 751.9,303.3 753.2,298.9 753.7,294.5" fill="none" stroke="#1aa6f0" stroke-width="1.0" /><polygon points="752.9,299.6 752.5,295.8 751.3,292.2 749.3,288.9 746.6,286.1 743.3,283.9 739.5,282.3 735.3,281.3 730.9,281.0 726.3,281.5 721.8,282.6 717.4,284.4 713.4,286.8 709.9,289.7 706.9,293.0 704.5,296.7 702.9,300.6 702.1,304.5 702.1,308.4 702.9,312.1 704.5,315.6 706.9,318.6 709.9,321.1 713.4,323.1 717.4,324.4 721.8,325.0 726.3,324.9 730.9,324.1 735.3,322.7 739.5,320.6 743.3,317.9 746.6,314.8 749.3,311.3 751.3,307.5 752.5,303.6 752.9,299.6" fill="none" stroke="#1aa6f0" stroke-width="1.0" /><polygon points="737.9,272.2 737.5,268.8 736.4,265.6 734.7,262.7 732.3,260.3 729.3,258.3 726.0,256.8 722.2,255.9 718.3,255.7 714.2,256.1 710.2,257.1 706.3,258.7 702.8,260.8 699.6,263.4 696.9,266.4 694.9,269.6 693.4,273.1 692.7,276.6 692.7,280.1 693.4,283.4 694.9,286.4 696.9,289.1 699.6,291.4 702.8,293.1 706.3,294.3 710.2,294.8 714.2,294.7 718.3,294.0 722.2,292.7 726.0,290.9 729.3,288.5 732.3,285.7 734.7,282.6 736.4,279.2 737.5,275.7 737.9,272.2" fill="none" stroke="#1aa6f0" stroke-width="1.0" /><polygon points="760.3,302.8 759.8,298.1 758.3,293.7 755.9,289.7 752.6,286.3 748.6,283.5 743.9,281.6 738.8,280.4 733.3,280.0 727.8,280.6 722.2,282.0 716.9,284.2 712.0,287.1 707.7,290.6 704.0,294.7 701.1,299.2 699.2,303.9 698.2,308.8 698.2,313.5 699.2,318.1 701.1,322.3 704.0,326.0 707.7,329.1 712.0,331.5 716.9,333.1 722.2,333.8 727.8,333.7 733.3,332.7 738.8,331.0 743.9,328.4 748.6,325.1 752.6,321.3 755.9,317.0 758.3,312.4 759.8,307.6 760.3,302.8" fill="none" stroke="#1aa6f0" stroke-width="1.0" /><polygon points="737.6,278.5 737.2,274.9 735.8,271.6 733.6,268.8 730.6,266.5 727.1,264.9 723.1,264.1 718.9,264.1 714.6,264.9 710.5,266.4 706.7,268.6 703.4,271.5 700.9,274.7 699.1,278.3 698.1,282.0 698.1,285.6 699.1,289.1 700.9,292.2 703.4,294.7 706.7,296.7 710.5,297.9 714.6,298.3 718.9,297.9 723.1,296.7 727.1,294.9 730.6,292.3 733.6,289.3 735.8,285.8 737.2,282.2 737.6,278.5" fill="none" stroke="#f06a1e" stroke-width="0.9" /><polygon points="752.4,220.7 751.9,216.0 750.4,211.6 748.0,207.7 744.7,204.2 740.7,201.5 736.0,199.5 730.9,198.3 725.4,198.0 719.9,198.5 714.3,199.9 709.0,202.1 704.1,205.0 699.8,208.6 696.1,212.7 693.2,217.1 691.3,221.9 690.3,226.7 690.3,231.5 691.3,236.0 693.2,240.2 696.1,243.9 699.8,247.0 704.1,249.4 709.0,251.0 714.3,251.8 719.9,251.7 725.4,250.7 730.9,248.9 736.0,246.3 740.7,243.1 744.7,239.2 748.0,234.9 750.4,230.3 751.9,225.5 752.4,220.7" fill="none" stroke="#1aa6f0" stroke-width="1.0" /><polygon points="748.9,216.2 748.4,211.7 747.0,207.5 744.7,203.8 741.6,200.5 737.7,197.9 733.3,196.0 728.4,194.8 723.2,194.5 717.9,195.0 712.6,196.4 707.5,198.4 702.8,201.2 698.7,204.6 695.2,208.5 692.4,212.8 690.6,217.3 689.6,221.9 689.6,226.5 690.6,230.8 692.4,234.8 695.2,238.4 698.7,241.3 702.8,243.6 707.5,245.1 712.6,245.9 717.9,245.8 723.2,244.8 728.4,243.1 733.3,240.7 737.7,237.6 741.6,233.9 744.7,229.8 747.0,225.4 748.4,220.8 748.9,216.2" fill="none" stroke="#1aa6f0" stroke-width="1.0" /><polygon points="744.0,211.9 743.6,207.9 742.3,204.1 740.2,200.6 737.4,197.7 733.9,195.3 729.9,193.6 725.4,192.6 720.7,192.3 715.9,192.7 711.2,193.9 706.6,195.8 702.3,198.4 698.6,201.4 695.4,205.0 692.9,208.8 691.2,212.9 690.4,217.1 690.4,221.2 691.2,225.1 692.9,228.8 695.4,232.0 698.6,234.6 702.3,236.7 706.6,238.1 711.2,238.7 715.9,238.6 720.7,237.8 725.4,236.2 729.9,234.0 733.9,231.2 737.4,227.9 740.2,224.2 742.3,220.2 743.6,216.1 744.0,211.9" fill="none" stroke="#1aa6f0" stroke-width="1.0" /><polygon points="753.7,225.5 753.2,220.9 751.8,216.6 749.4,212.7 746.2,209.4 742.3,206.7 737.7,204.8 732.7,203.6 727.4,203.3 722.0,203.8 716.6,205.2 711.4,207.3 706.6,210.2 702.3,213.6 698.7,217.6 695.9,222.0 694.0,226.6 693.0,231.4 693.0,236.0 694.0,240.5 695.9,244.6 698.7,248.2 702.3,251.2 706.6,253.5 711.4,255.1 716.6,255.8 722.0,255.7 727.4,254.8 732.7,253.0 737.7,250.5 742.3,247.4 746.2,243.6 749.4,239.4 751.8,234.9 753.2,230.2 753.7,225.5" fill="none" stroke="#1aa6f0" stroke-width="1.0" /><polygon points="753.7,230.5 753.2,226.2 751.9,222.2 749.7,218.6 746.7,215.5 743.0,213.0 738.8,211.2 734.1,210.1 729.2,209.8 724.1,210.3 719.1,211.6 714.3,213.6 709.8,216.2 705.8,219.5 702.5,223.2 699.9,227.2 698.1,231.5 697.2,235.9 697.2,240.3 698.1,244.4 699.9,248.2 702.5,251.6 705.8,254.4 709.8,256.6 714.3,258.0 719.1,258.7 724.1,258.6 729.2,257.7 734.1,256.1 738.8,253.8 743.0,250.8 746.7,247.3 749.7,243.4 751.9,239.2 753.2,234.9 753.7,230.5" fill="none" stroke="#1aa6f0" stroke-width="1.0" /><polygon points="752.9,235.5 752.5,231.7 751.3,228.1 749.3,224.9 746.6,222.1 743.3,219.8 739.5,218.2 735.3,217.2 730.9,217.0 726.3,217.4 721.8,218.5 717.4,220.3 713.4,222.7 709.9,225.6 706.9,229.0 704.5,232.6 702.9,236.5 702.1,240.5 702.1,244.4 702.9,248.1 704.5,251.5 706.9,254.5 709.9,257.1 713.4,259.0 717.4,260.3 721.8,261.0 726.3,260.9 730.9,260.1 735.3,258.6 739.5,256.5 743.3,253.9 746.6,250.7 749.3,247.2 751.3,243.4 752.5,239.5 752.9,235.5" fill="none" stroke="#1aa6f0" stroke-width="1.0" /><polygon points="737.9,208.2 737.5,204.8 736.4,201.6 734.7,198.7 732.3,196.2 729.3,194.2 726.0,192.7 722.2,191.9 718.3,191.6 714.2,192.0 710.2,193.0 706.3,194.6 702.8,196.8 699.6,199.4 696.9,202.3 694.9,205.6 693.4,209.0 692.7,212.5 692.7,216.0 693.4,219.3 694.9,222.4 696.9,225.1 699.6,227.3 702.8,229.0 706.3,230.2 710.2,230.8 714.2,230.7 718.3,230.0 722.2,228.7 726.0,226.8 729.3,224.4 732.3,221.6 734.7,218.5 736.4,215.2 737.5,211.7 737.9,208.2" fill="none" stroke="#1aa6f0" stroke-width="1.0" /><polygon points="760.3,238.7 759.8,234.0 758.3,229.6 755.9,225.6 752.6,222.2 748.6,219.5 743.9,217.5 738.8,216.3 733.3,216.0 727.8,216.5 722.2,217.9 716.9,220.1 712.0,223.0 707.7,226.6 704.0,230.7 701.1,235.1 699.2,239.9 698.2,244.7 698.2,249.5 699.2,254.0 701.1,258.2 704.0,261.9 707.7,265.0 712.0,267.4 716.9,269.0 722.2,269.8 727.8,269.6 733.3,268.7 738.8,266.9 743.9,264.3 748.6,261.1 752.6,257.2 755.9,252.9 758.3,248.3 759.8,243.5 760.3,238.7" fill="none" stroke="#1aa6f0" stroke-width="1.0" /><polygon points="737.6,214.4 737.2,210.8 735.8,207.6 733.6,204.7 730.6,202.5 727.1,200.9 723.1,200.1 718.9,200.0 714.6,200.8 710.5,202.4 706.7,204.6 703.4,207.4 700.9,210.7 699.1,214.2 698.1,217.9 698.1,221.6 699.1,225.0 700.9,228.1 703.4,230.7 706.7,232.6 710.5,233.8 714.6,234.2 718.9,233.8 723.1,232.7 727.1,230.8 730.6,228.3 733.6,225.2 735.8,221.8 737.2,218.1 737.6,214.4" fill="none" stroke="#f06a1e" stroke-width="0.9" /><polyline points="721.3,312.5 721.3,191.7" fill="none" stroke="#a45cf2" stroke-width="1.2" /><polygon points="418.0,253.1 680.0,215.0 688.0,330.0 420.8,371.8" fill="none" stroke="#f06a1e" stroke-width="1.0" /><polygon points="426.0,262.1 674.0,223.0 682.0,322.0 428.8,363.8" fill="none" stroke="#1aa6f0" stroke-width="1.0" /><polyline points="398.0,218.1 670.0,179.0" fill="none" stroke="#1aa6f0" stroke-width="1.0" /><polyline points="430.0,251.5 418.0,253.1 418.0,275.1" fill="none" stroke="#ff10ff" stroke-width="3.0" /><rect x="412.957" y="249.1402" width="10" height="8" fill="#ff10ff" opacity="0.6"/><polyline points="668.0,216.6 680.0,215.0 680.0,237.0" fill="none" stroke="#ff10ff" stroke-width="3.0" /><rect x="675" y="211" width="10" height="8" fill="#ff10ff" opacity="0.6"/><polyline points="676.0,331.6 688.0,330.0 688.0,308.0" fill="none" stroke="#ff10ff" stroke-width="3.0" /><rect x="683" y="326" width="10" height="8" fill="#ff10ff" opacity="0.6"/><polyline points="432.8,370.2 420.8,371.8 420.8,349.8" fill="none" stroke="#ff10ff" stroke-width="3.0" /><rect x="415.78499999999997" y="367.8254" width="10" height="8" fill="#ff10ff" opacity="0.6"/><line x1="550" y1="213" x2="554" y2="222" stroke="#ff10ff" stroke-width="3"/><line x1="550" y1="365" x2="554" y2="375" stroke="#ff10ff" stroke-width="3"/><polyline points="251.7,85 287,160 300,190 387,400" fill="none" stroke="#f06a1e" stroke-width="1.1"/><polyline points="297,105 345,221 525,306" fill="none" stroke="#40e0f0" stroke-width="1"/><polyline points="296,196 352,350" fill="none" stroke="#1aa6f0" stroke-width="1"/><line x1="493.8" y1="85" x2="668.8" y2="480" stroke="#ff10ff" stroke-width="1.2"/><polygon points="270,146 279,141 290,145 289,154 283,158 275,155" fill="#e52010"/><polygon points="276,155 289,152 285,162" fill="#f0f0f0"/><ellipse cx="328.3" cy="193.7" rx="14.5" ry="13.5" fill="#1b5df0"/><path d="M328.3,180.2 A14.5 13.5 0 0 0 313.8,193.7 L328.3,193.7 Z M328.3,207.2 A14.5 13.5 0 0 0 342.8,193.7 L328.3,193.7 Z" fill="#e81010"/><path d="M301.3,401.3 L285,403.5 L302.4,443 M295.9,443.5 L319.8,442 M319.8,442 V461.5 M319.8,455 L778,393.2 M778,377 V396.7 M778.8,377 L802,374.2 M778.8,163 L802,160.4 M794.9,161.1 V375.3" fill="none" stroke="#d8d820" stroke-width="1"/><text x="0" y="0" transform="translate(549,437.5) rotate(-7.7)" text-anchor="middle" font-family="Liberation Sans" font-size="15" fill="#2a8fe0" textLength="57" lengthAdjust="spacingAndGlyphs">64.811</text><text x="0" y="0" transform="translate(808,266.5) rotate(-90)" text-anchor="middle" font-family="Liberation Sans" font-size="14.5" fill="#2a8fe0" textLength="51" lengthAdjust="spacingAndGlyphs">35.440</text><text x="0" y="0" transform="translate(287.5,421.5) rotate(-73)" text-anchor="middle" font-family="Liberation Sans" font-size="13" fill="#2a8fe0" textLength="42" lengthAdjust="spacingAndGlyphs">10.100</text><polygon points="152,438 176,434.5 175,431.5 185,434 175,438.5 176,437 153,442" fill="#1010f0"/><line x1="154" y1="440" x2="154" y2="418" stroke="#10e010" stroke-width="3"/><polygon points="150,422 154,412 158,422" fill="#10e010"/><polygon points="145,422 152,430 155,442 151,441 145,430" fill="#e01010"/><rect x="85" y="460" width="180" height="20" fill="#185a90"/><text x="90" y="475.3" font-family="Liberation Sans" font-weight="bold" font-size="13.8" fill="#dcdfd9" xml:space="preserve">G0  G17 G91 G21 G40 G43</text></svg></div>
<div class="p" style="left:1005px;top:10px;width:130px;height:259px;"></div>
<div class="p" style="left:1140px;top:10px;width:225px;height:259px;"></div>
<div class="b t1" style="left:1011px;top:21px;width:57px;height:57px;"></div>
<div class="b t1" style="left:1071px;top:21px;width:57px;height:57px;"></div>
<div class="b t1" style="left:1011px;top:81px;width:57px;height:57px;"></div>
<div class="b t1" style="left:1071px;top:81px;width:57px;height:57px;"></div>
<div class="b t1" style="left:1151px;top:21px;width:57px;height:57px;"></div>
<div class="b t1" style="left:1151px;top:81px;width:57px;height:57px;"></div>
<div class="b t1" style="left:1151px;top:141px;width:57px;height:57px;"></div>
<div class="b t1" style="left:1151px;top:201px;width:57px;height:57px;"></div>
<div class="p" style="left:1005px;top:273px;width:361px;height:305px;"></div>
<div class="b" style="left:1017px;top:284px;width:66px;height:66px;"></div>
<div class="b" style="left:1087px;top:284px;width:66px;height:66px;"></div>
<div class="b" style="left:1157px;top:284px;width:66px;height:66px;"></div>
<div class="b" style="left:1227px;top:284px;width:66px;height:66px;"></div>
<div class="b" style="left:1017px;top:354px;width:66px;height:66px;"></div>
<div class="b" style="left:1157px;top:354px;width:66px;height:66px;"></div>
<div class="b" style="left:1017px;top:424px;width:66px;height:66px;"></div>
<div class="b" style="left:1087px;top:424px;width:66px;height:66px;"></div>
<div class="b" style="left:1157px;top:424px;width:66px;height:66px;"></div>
<div class="b" style="left:1227px;top:424px;width:66px;height:66px;"></div>
<div class="b" style="left:1017px;top:504px;width:66px;height:66px;"></div>
<div class="b" style="left:1157px;top:504px;width:66px;height:66px;"></div>
<div class="b t1" style="left:1306px;top:283px;width:48px;height:48px;"></div>
<div class="b t1" style="left:1306px;top:343px;width:48px;height:48px;"></div>
<div class="b t1" style="left:1306px;top:403px;width:48px;height:48px;"></div>
<div class="b t1" style="left:1306px;top:463px;width:48px;height:48px;"></div>
<div class="b t1" style="left:1306px;top:523px;width:48px;height:48px;"></div>
<div class="p" style="left:10px;top:489px;width:390px;height:90px;"></div>
<div class="p" style="left:405px;top:489px;width:400px;height:90px;"></div>
<div class="p" style="left:815px;top:489px;width:180px;height:90px;"></div>
<div class="b t1" style="left:16px;top:515px;width:58px;height:58px;border-radius:6px"></div>
<div class="b t1" style="left:136px;top:515px;width:58px;height:58px;border-radius:6px"></div>
<div class="b t1" style="left:211px;top:515px;width:58px;height:58px;border-radius:6px"></div>
<div class="b t1" style="left:331px;top:515px;width:58px;height:58px;border-radius:6px"></div>
<div class="b t1" style="left:411px;top:515px;width:58px;height:58px;border-radius:6px"></div>
<div class="b t1" style="left:531px;top:515px;width:58px;height:58px;border-radius:6px"></div>
<div class="b" style="left:824px;top:495px;width:77px;height:77px;"></div>
<div class="b" style="left:908px;top:495px;width:77px;height:77px;"></div>
<div class="p" style="left:90px;top:586px;width:1040px;height:180px;"></div>
<div class="b t1" style="left:101px;top:592px;width:58px;height:52px;"></div>
<div class="b t1" style="left:101px;top:647px;width:58px;height:52px;"></div>
<div class="b t1" style="left:101px;top:702px;width:58px;height:52px;"></div>
<div class="b t1" style="left:741px;top:592px;width:57px;height:52px;"></div>
<div class="b t1" style="left:801px;top:592px;width:57px;height:52px;"></div>
<div class="b t1" style="left:741px;top:647px;width:57px;height:52px;"></div>
<div class="b t1" style="left:801px;top:647px;width:57px;height:52px;"></div>
<div class="p" style="left:880px;top:597px;width:240px;height:159px;"></div>
<div class="p" style="left:1145px;top:587px;width:220px;height:179px;"></div>
<div class="b t1" style="left:1156px;top:597px;width:62px;height:62px;"></div>
<div class="b t1" style="left:1223px;top:597px;width:62px;height:62px;"></div>
<div class="b t1" style="left:1290px;top:597px;width:62px;height:62px;"></div>
<div class="b" style="left:1157px;top:663px;width:96px;height:96px;border-width:3px"></div>
<div class="b" style="left:1257px;top:663px;width:96px;height:96px;border-width:3px"></div>
<svg style="left:1011px;top:21px;" width="57" height="57" viewBox="0 0 57 57"><polygon points="5.1,19.8 18.5,27.25 5.1,34.7" fill="#17598f"/><polygon points="53.8,19.8 40,27.25 53.8,34.7" fill="#17598f"/><text x="18.3" y="33.6" font-family="Liberation Sans" font-weight="bold" font-size="18.5" fill="#17598f" textLength="19.6" lengthAdjust="spacingAndGlyphs" text-anchor="start">X0</text></svg>
<svg style="left:1071px;top:21px;" width="57" height="57" viewBox="0 0 57 57"><polygon points="5.1,19.8 18.5,27.25 5.1,34.7" fill="#17598f"/><polygon points="53.8,19.8 40,27.25 53.8,34.7" fill="#17598f"/><text x="18.3" y="33.6" font-family="Liberation Sans" font-weight="bold" font-size="18.5" fill="#17598f" textLength="19.6" lengthAdjust="spacingAndGlyphs" text-anchor="start">Y0</text></svg>
<svg style="left:1071px;top:81px;" width="57" height="57" viewBox="0 0 57 57"><polygon points="5.1,19.8 18.5,27.25 5.1,34.7" fill="#17598f"/><polygon points="53.8,19.8 40,27.25 53.8,34.7" fill="#17598f"/><text x="18.3" y="33.6" font-family="Liberation Sans" font-weight="bold" font-size="18.5" fill="#17598f" textLength="19.6" lengthAdjust="spacingAndGlyphs" text-anchor="start">A0</text></svg>
<svg style="left:1011px;top:81px;" width="57" height="57" viewBox="0 0 57 57"><polygon points="5.1,20.7 18.5,27.85 5.1,35.0" fill="#17598f"/><polygon points="53.8,20.7 40,27.85 53.8,35.0" fill="#17598f"/><text x="18.3" y="25.1" font-family="Liberation Sans" font-weight="bold" font-size="18" fill="#17598f" textLength="19.6" lengthAdjust="spacingAndGlyphs" text-anchor="start">X0</text><text x="18.3" y="43.9" font-family="Liberation Sans" font-weight="bold" font-size="18" fill="#17598f" textLength="19.6" lengthAdjust="spacingAndGlyphs" text-anchor="start">Y0</text></svg>
<svg style="left:1151px;top:21px;" width="57" height="57" viewBox="0 0 57 57"><circle cx="24.9" cy="24" r="15.4" fill="none" stroke="#17598f" stroke-width="3.1"/><rect x="4.3" y="22.5" width="40.7" height="3" fill="#17598f"/><rect x="23.4" y="3.8" width="3" height="40.8" fill="#17598f"/><defs><radialGradient id="ledX" cx="0.5" cy="0.3" r="0.7"><stop offset="0" stop-color="#d9f2c9"/><stop offset="0.5" stop-color="#7fcf5a"/><stop offset="1" stop-color="#4cb82e"/></radialGradient></defs><circle cx="11" cy="46.8" r="6.2" fill="url(#ledX)"/><text x="39.3" y="54" font-family="Liberation Sans" font-weight="bold" font-size="21" fill="#17598f" textLength="13.5" lengthAdjust="spacingAndGlyphs" text-anchor="start">X</text></svg>
<svg style="left:1151px;top:81px;" width="57" height="57" viewBox="0 0 57 57"><circle cx="24.9" cy="24" r="15.4" fill="none" stroke="#17598f" stroke-width="3.1"/><rect x="4.3" y="22.5" width="40.7" height="3" fill="#17598f"/><rect x="23.4" y="3.8" width="3" height="40.8" fill="#17598f"/><defs><radialGradient id="ledY" cx="0.5" cy="0.3" r="0.7"><stop offset="0" stop-color="#d9f2c9"/><stop offset="0.5" stop-color="#7fcf5a"/><stop offset="1" stop-color="#4cb82e"/></radialGradient></defs><circle cx="11" cy="46.8" r="6.2" fill="url(#ledY)"/><text x="39.3" y="54" font-family="Liberation Sans" font-weight="bold" font-size="21" fill="#17598f" textLength="13.5" lengthAdjust="spacingAndGlyphs" text-anchor="start">Y</text></svg>
<svg style="left:1151px;top:141px;" width="57" height="57" viewBox="0 0 57 57"><circle cx="24.9" cy="24" r="15.4" fill="none" stroke="#17598f" stroke-width="3.1"/><rect x="4.3" y="22.5" width="40.7" height="3" fill="#17598f"/><rect x="23.4" y="3.8" width="3" height="40.8" fill="#17598f"/><defs><radialGradient id="ledZ" cx="0.5" cy="0.3" r="0.7"><stop offset="0" stop-color="#d9f2c9"/><stop offset="0.5" stop-color="#7fcf5a"/><stop offset="1" stop-color="#4cb82e"/></radialGradient></defs><circle cx="11" cy="46.8" r="6.2" fill="url(#ledZ)"/><text x="39.3" y="54" font-family="Liberation Sans" font-weight="bold" font-size="21" fill="#17598f" textLength="13.5" lengthAdjust="spacingAndGlyphs" text-anchor="start">Z</text></svg>
<svg style="left:1151px;top:201px;" width="57" height="57" viewBox="0 0 57 57"><circle cx="24.9" cy="24" r="15.4" fill="none" stroke="#17598f" stroke-width="3.1"/><rect x="4.3" y="22.5" width="40.7" height="3" fill="#17598f"/><rect x="23.4" y="3.8" width="3" height="40.8" fill="#17598f"/><defs><radialGradient id="ledA" cx="0.5" cy="0.3" r="0.7"><stop offset="0" stop-color="#d9f2c9"/><stop offset="0.5" stop-color="#7fcf5a"/><stop offset="1" stop-color="#4cb82e"/></radialGradient></defs><circle cx="11" cy="46.8" r="6.2" fill="url(#ledA)"/><text x="39.3" y="54" font-family="Liberation Sans" font-weight="bold" font-size="21" fill="#17598f" textLength="13.5" lengthAdjust="spacingAndGlyphs" text-anchor="start">A</text></svg>
<div class="t" style="right:21px;top:25.80px;font-size:21.5px;line-height:21.5px;font-weight:bold;color:#bb0b0b;">-1.100</div>
<div class="t" style="right:21px;top:58.99px;font-size:16.2px;line-height:16.2px;font-weight:bold;color:#9d9d08;">-1.100</div>
<div class="t" style="left:1214px;top:34.23px;font-size:17.8px;line-height:17.8px;font-weight:bold;color:#fb6a10;">G54:</div>
<div class="t" style="right:21px;top:85.80px;font-size:21.5px;line-height:21.5px;font-weight:bold;color:#bb0b0b;">-7.064</div>
<div class="t" style="right:21px;top:118.99px;font-size:16.2px;line-height:16.2px;font-weight:bold;color:#9d9d08;">-7.064</div>
<div class="t" style="left:1214px;top:97.43px;font-size:17.8px;line-height:17.8px;font-weight:bold;color:#fb6a10;">G54:</div>
<div class="t" style="right:21px;top:145.80px;font-size:21.5px;line-height:21.5px;font-weight:bold;color:#bb0b0b;">18.340</div>
<div class="t" style="right:21px;top:178.99px;font-size:16.2px;line-height:16.2px;font-weight:bold;color:#9d9d08;">165.298</div>
<div class="t" style="left:1214px;top:161.03px;font-size:17.8px;line-height:17.8px;font-weight:bold;color:#fb6a10;">G54:</div>
<div class="t" style="right:21px;top:205.80px;font-size:21.5px;line-height:21.5px;font-weight:bold;color:#bb0b0b;">0.00</div>
<div class="t" style="right:21px;top:238.99px;font-size:16.2px;line-height:16.2px;font-weight:bold;color:#9d9d08;">0.00</div>
<svg style="left:1017px;top:284px;" width="66" height="66" viewBox="0 0 66 66"><polygon points="33.5,5.8 59.7,32.5 50.5,32.5 50.5,60.5 17,60.5 17,32.5 7.5,32.5" fill="#17598f" stroke="#17598f" stroke-width="1.2" stroke-linejoin="round" transform="translate(26.94,27.14) rotate(-45) translate(-33.25,-33.15)"/></svg>
<svg style="left:1087px;top:284px;" width="66" height="66" viewBox="0 0 66 66"><polygon points="33.5,5.8 59.7,32.5 50.5,32.5 50.5,60.5 17,60.5 17,32.5 7.5,32.5" fill="#17598f" stroke="#17598f" stroke-width="1.2" stroke-linejoin="round" transform="translate(33.25,33.15) rotate(0) translate(-33.25,-33.15)"/></svg>
<svg style="left:1157px;top:284px;" width="66" height="66" viewBox="0 0 66 66"><polygon points="33.5,5.8 59.7,32.5 50.5,32.5 50.5,60.5 17,60.5 17,32.5 7.5,32.5" fill="#17598f" stroke="#17598f" stroke-width="1.2" stroke-linejoin="round" transform="translate(39.06,27.14) rotate(45) translate(-33.25,-33.15)"/></svg>
<svg style="left:1017px;top:354px;" width="66" height="66" viewBox="0 0 66 66"><polygon points="33.5,5.8 59.7,32.5 50.5,32.5 50.5,60.5 17,60.5 17,32.5 7.5,32.5" fill="#17598f" stroke="#17598f" stroke-width="1.2" stroke-linejoin="round" transform="translate(32.85,33.25) rotate(-90) translate(-33.25,-33.15)"/></svg>
<svg style="left:1157px;top:354px;" width="66" height="66" viewBox="0 0 66 66"><polygon points="33.5,5.8 59.7,32.5 50.5,32.5 50.5,60.5 17,60.5 17,32.5 7.5,32.5" fill="#17598f" stroke="#17598f" stroke-width="1.2" stroke-linejoin="round" transform="translate(33.15,33.25) rotate(90) translate(-33.25,-33.15)"/></svg>
<svg style="left:1017px;top:424px;" width="66" height="66" viewBox="0 0 66 66"><polygon points="33.5,5.8 59.7,32.5 50.5,32.5 50.5,60.5 17,60.5 17,32.5 7.5,32.5" fill="#17598f" stroke="#17598f" stroke-width="1.2" stroke-linejoin="round" transform="translate(26.94,38.86) rotate(-135) translate(-33.25,-33.15)"/></svg>
<svg style="left:1087px;top:424px;" width="66" height="66" viewBox="0 0 66 66"><polygon points="33.5,5.8 59.7,32.5 50.5,32.5 50.5,60.5 17,60.5 17,32.5 7.5,32.5" fill="#17598f" stroke="#17598f" stroke-width="1.2" stroke-linejoin="round" transform="translate(33.25,32.85) rotate(180) translate(-33.25,-33.15)"/></svg>
<svg style="left:1157px;top:424px;" width="66" height="66" viewBox="0 0 66 66"><polygon points="33.5,5.8 59.7,32.5 50.5,32.5 50.5,60.5 17,60.5 17,32.5 7.5,32.5" fill="#17598f" stroke="#17598f" stroke-width="1.2" stroke-linejoin="round" transform="translate(39.06,38.86) rotate(135) translate(-33.25,-33.15)"/></svg>
<svg style="left:1227px;top:284px;" width="66" height="66" viewBox="0 0 66 66"><polygon points="10.1,14.5 33.1,14.5 33.1,20.8 19.3,43.5 33.7,43.5 33.7,50 10.1,50 10.1,43.7 23.9,21 10.1,21" fill="#17598f"/><rect x="44.3" y="20.3" width="5.1" height="24" fill="#17598f"/><rect x="36.6" y="29.3" width="21.1" height="5.4" fill="#17598f"/></svg>
<svg style="left:1227px;top:424px;" width="66" height="66" viewBox="0 0 66 66"><polygon points="10.1,14.5 33.1,14.5 33.1,20.8 19.3,43.5 33.7,43.5 33.7,50 10.1,50 10.1,43.7 23.9,21 10.1,21" fill="#17598f"/><rect x="39.5" y="30.2" width="21.5" height="6.2" fill="#17598f"/></svg>
<svg style="left:1017px;top:504px;" width="66" height="66" viewBox="0 0 66 66"><text x="7" y="49.7" font-family="Liberation Sans" font-weight="bold" font-size="52.2" fill="#17598f" textLength="31.8" lengthAdjust="spacingAndGlyphs">A</text><rect x="40" y="29" width="21" height="5.5" fill="#17598f"/></svg>
<svg style="left:1157px;top:504px;" width="66" height="66" viewBox="0 0 66 66"><text x="8" y="49.7" font-family="Liberation Sans" font-weight="bold" font-size="52.2" fill="#17598f" textLength="31.9" lengthAdjust="spacingAndGlyphs">A</text><rect x="48.7" y="19.3" width="4.7" height="25" fill="#17598f"/><rect x="41" y="29.7" width="21.1" height="5.9" fill="#17598f"/></svg>
<div class="t" style="left:820.3px;width:600px;text-align:center;top:360.03px;font-size:16.5px;line-height:16.5px;font-weight:bold;color:#17598f;">1.0</div>
<div class="t" style="left:820px;width:600px;text-align:center;top:394.92px;font-size:19px;line-height:19px;font-weight:normal;color:#17598f;transform:scaleX(1.25)">0</div>
<div class="t" style="left:960px;width:600px;text-align:center;top:376.92px;font-size:19px;line-height:19px;font-weight:normal;color:#17598f;transform:scaleX(1.25)">0</div>
<div class="t" style="left:820px;width:600px;text-align:center;top:527.92px;font-size:19px;line-height:19px;font-weight:normal;color:#17598f;transform:scaleX(1.25)">0</div>
<svg style="left:1306px;top:283px;" width="48" height="48" viewBox="0 0 48 48"><rect x="2.1" y="29.5" width="43.6" height="13.3" fill="#9db3c4"/><line x1="3.6" y1="29.5" x2="3.6" y2="35.8" stroke="#7f9cb3" stroke-width="0.7"/><line x1="6.2" y1="29.5" x2="6.2" y2="33.2" stroke="#7f9cb3" stroke-width="0.7"/><line x1="8.7" y1="29.5" x2="8.7" y2="33.2" stroke="#7f9cb3" stroke-width="0.7"/><line x1="11.2" y1="29.5" x2="11.2" y2="33.2" stroke="#7f9cb3" stroke-width="0.7"/><line x1="13.8" y1="29.5" x2="13.8" y2="33.2" stroke="#7f9cb3" stroke-width="0.7"/><line x1="16.4" y1="29.5" x2="16.4" y2="35.8" stroke="#7f9cb3" stroke-width="0.7"/><line x1="18.9" y1="29.5" x2="18.9" y2="33.2" stroke="#7f9cb3" stroke-width="0.7"/><line x1="21.4" y1="29.5" x2="21.4" y2="33.2" stroke="#7f9cb3" stroke-width="0.7"/><line x1="24.0" y1="29.5" x2="24.0" y2="33.2" stroke="#7f9cb3" stroke-width="0.7"/><line x1="26.6" y1="29.5" x2="26.6" y2="33.2" stroke="#7f9cb3" stroke-width="0.7"/><line x1="29.1" y1="29.5" x2="29.1" y2="35.8" stroke="#7f9cb3" stroke-width="0.7"/><line x1="31.6" y1="29.5" x2="31.6" y2="33.2" stroke="#7f9cb3" stroke-width="0.7"/><line x1="34.2" y1="29.5" x2="34.2" y2="33.2" stroke="#7f9cb3" stroke-width="0.7"/><line x1="36.8" y1="29.5" x2="36.8" y2="33.2" stroke="#7f9cb3" stroke-width="0.7"/><line x1="39.3" y1="29.5" x2="39.3" y2="33.2" stroke="#7f9cb3" stroke-width="0.7"/><line x1="41.9" y1="29.5" x2="41.9" y2="35.8" stroke="#7f9cb3" stroke-width="0.7"/><line x1="44.4" y1="29.5" x2="44.4" y2="33.2" stroke="#7f9cb3" stroke-width="0.7"/><g fill="#17598f"><rect x="3.9" y="18.3" width="1.5" height="10.4"/><rect x="42.1" y="18.3" width="1.5" height="10.4"/><rect x="5" y="22.8" width="37.5" height="1.4"/><polygon points="5,23.5 15.8,20.8 15.8,26.2"/><polygon points="42.5,23.5 31.7,20.8 31.7,26.2"/></g><text x="24" y="18.6" font-family="Liberation Sans" font-weight="bold" font-size="19.5" fill="#17598f" textLength="32.6" lengthAdjust="spacingAndGlyphs" text-anchor="middle">SET</text></svg>
<svg style="left:1306px;top:343px;" width="48" height="48" viewBox="0 0 48 48"><rect x="2.1" y="29.5" width="43.6" height="13.3" fill="#9db3c4"/><line x1="3.6" y1="29.5" x2="3.6" y2="35.8" stroke="#7f9cb3" stroke-width="0.7"/><line x1="6.2" y1="29.5" x2="6.2" y2="33.2" stroke="#7f9cb3" stroke-width="0.7"/><line x1="8.7" y1="29.5" x2="8.7" y2="33.2" stroke="#7f9cb3" stroke-width="0.7"/><line x1="11.2" y1="29.5" x2="11.2" y2="33.2" stroke="#7f9cb3" stroke-width="0.7"/><line x1="13.8" y1="29.5" x2="13.8" y2="33.2" stroke="#7f9cb3" stroke-width="0.7"/><line x1="16.4" y1="29.5" x2="16.4" y2="35.8" stroke="#7f9cb3" stroke-width="0.7"/><line x1="18.9" y1="29.5" x2="18.9" y2="33.2" stroke="#7f9cb3" stroke-width="0.7"/><line x1="21.4" y1="29.5" x2="21.4" y2="33.2" stroke="#7f9cb3" stroke-width="0.7"/><line x1="24.0" y1="29.5" x2="24.0" y2="33.2" stroke="#7f9cb3" stroke-width="0.7"/><line x1="26.6" y1="29.5" x2="26.6" y2="33.2" stroke="#7f9cb3" stroke-width="0.7"/><line x1="29.1" y1="29.5" x2="29.1" y2="35.8" stroke="#7f9cb3" stroke-width="0.7"/><line x1="31.6" y1="29.5" x2="31.6" y2="33.2" stroke="#7f9cb3" stroke-width="0.7"/><line x1="34.2" y1="29.5" x2="34.2" y2="33.2" stroke="#7f9cb3" stroke-width="0.7"/><line x1="36.8" y1="29.5" x2="36.8" y2="33.2" stroke="#7f9cb3" stroke-width="0.7"/><line x1="39.3" y1="29.5" x2="39.3" y2="33.2" stroke="#7f9cb3" stroke-width="0.7"/><line x1="41.9" y1="29.5" x2="41.9" y2="35.8" stroke="#7f9cb3" stroke-width="0.7"/><line x1="44.4" y1="29.5" x2="44.4" y2="33.2" stroke="#7f9cb3" stroke-width="0.7"/><g fill="#17598f"><rect x="3.9" y="18.3" width="1.5" height="10.4"/><rect x="42.1" y="18.3" width="1.5" height="10.4"/><rect x="5" y="22.8" width="37.5" height="1.4"/><polygon points="5,23.5 15.8,20.8 15.8,26.2"/><polygon points="42.5,23.5 31.7,20.8 31.7,26.2"/></g><text x="24" y="18.6" font-family="Liberation Sans" font-weight="bold" font-size="19.5" fill="#17598f" textLength="37" lengthAdjust="spacingAndGlyphs" text-anchor="middle">0.01</text></svg>
<svg style="left:1306px;top:403px;" width="48" height="48" viewBox="0 0 48 48"><rect x="2.1" y="29.5" width="43.6" height="13.3" fill="#9db3c4"/><line x1="3.6" y1="29.5" x2="3.6" y2="35.8" stroke="#7f9cb3" stroke-width="0.7"/><line x1="6.2" y1="29.5" x2="6.2" y2="33.2" stroke="#7f9cb3" stroke-width="0.7"/><line x1="8.7" y1="29.5" x2="8.7" y2="33.2" stroke="#7f9cb3" stroke-width="0.7"/><line x1="11.2" y1="29.5" x2="11.2" y2="33.2" stroke="#7f9cb3" stroke-width="0.7"/><line x1="13.8" y1="29.5" x2="13.8" y2="33.2" stroke="#7f9cb3" stroke-width="0.7"/><line x1="16.4" y1="29.5" x2="16.4" y2="35.8" stroke="#7f9cb3" stroke-width="0.7"/><line x1="18.9" y1="29.5" x2="18.9" y2="33.2" stroke="#7f9cb3" stroke-width="0.7"/><line x1="21.4" y1="29.5" x2="21.4" y2="33.2" stroke="#7f9cb3" stroke-width="0.7"/><line x1="24.0" y1="29.5" x2="24.0" y2="33.2" stroke="#7f9cb3" stroke-width="0.7"/><line x1="26.6" y1="29.5" x2="26.6" y2="33.2" stroke="#7f9cb3" stroke-width="0.7"/><line x1="29.1" y1="29.5" x2="29.1" y2="35.8" stroke="#7f9cb3" stroke-width="0.7"/><line x1="31.6" y1="29.5" x2="31.6" y2="33.2" stroke="#7f9cb3" stroke-width="0.7"/><line x1="34.2" y1="29.5" x2="34.2" y2="33.2" stroke="#7f9cb3" stroke-width="0.7"/><line x1="36.8" y1="29.5" x2="36.8" y2="33.2" stroke="#7f9cb3" stroke-width="0.7"/><line x1="39.3" y1="29.5" x2="39.3" y2="33.2" stroke="#7f9cb3" stroke-width="0.7"/><line x1="41.9" y1="29.5" x2="41.9" y2="35.8" stroke="#7f9cb3" stroke-width="0.7"/><line x1="44.4" y1="29.5" x2="44.4" y2="33.2" stroke="#7f9cb3" stroke-width="0.7"/><g fill="#17598f"><rect x="3.9" y="18.3" width="1.5" height="10.4"/><rect x="42.1" y="18.3" width="1.5" height="10.4"/><rect x="5" y="22.8" width="37.5" height="1.4"/><polygon points="5,23.5 15.8,20.8 15.8,26.2"/><polygon points="42.5,23.5 31.7,20.8 31.7,26.2"/></g><text x="24" y="18.6" font-family="Liberation Sans" font-weight="bold" font-size="19.5" fill="#17598f" textLength="27" lengthAdjust="spacingAndGlyphs" text-anchor="middle">0.1</text></svg>
<svg style="left:1306px;top:463px;" width="48" height="48" viewBox="0 0 48 48"><rect x="2.1" y="29.5" width="43.6" height="13.3" fill="#9db3c4"/><line x1="3.6" y1="29.5" x2="3.6" y2="35.8" stroke="#7f9cb3" stroke-width="0.7"/><line x1="6.2" y1="29.5" x2="6.2" y2="33.2" stroke="#7f9cb3" stroke-width="0.7"/><line x1="8.7" y1="29.5" x2="8.7" y2="33.2" stroke="#7f9cb3" stroke-width="0.7"/><line x1="11.2" y1="29.5" x2="11.2" y2="33.2" stroke="#7f9cb3" stroke-width="0.7"/><line x1="13.8" y1="29.5" x2="13.8" y2="33.2" stroke="#7f9cb3" stroke-width="0.7"/><line x1="16.4" y1="29.5" x2="16.4" y2="35.8" stroke="#7f9cb3" stroke-width="0.7"/><line x1="18.9" y1="29.5" x2="18.9" y2="33.2" stroke="#7f9cb3" stroke-width="0.7"/><line x1="21.4" y1="29.5" x2="21.4" y2="33.2" stroke="#7f9cb3" stroke-width="0.7"/><line x1="24.0" y1="29.5" x2="24.0" y2="33.2" stroke="#7f9cb3" stroke-width="0.7"/><line x1="26.6" y1="29.5" x2="26.6" y2="33.2" stroke="#7f9cb3" stroke-width="0.7"/><line x1="29.1" y1="29.5" x2="29.1" y2="35.8" stroke="#7f9cb3" stroke-width="0.7"/><line x1="31.6" y1="29.5" x2="31.6" y2="33.2" stroke="#7f9cb3" stroke-width="0.7"/><line x1="34.2" y1="29.5" x2="34.2" y2="33.2" stroke="#7f9cb3" stroke-width="0.7"/><line x1="36.8" y1="29.5" x2="36.8" y2="33.2" stroke="#7f9cb3" stroke-width="0.7"/><line x1="39.3" y1="29.5" x2="39.3" y2="33.2" stroke="#7f9cb3" stroke-width="0.7"/><line x1="41.9" y1="29.5" x2="41.9" y2="35.8" stroke="#7f9cb3" stroke-width="0.7"/><line x1="44.4" y1="29.5" x2="44.4" y2="33.2" stroke="#7f9cb3" stroke-width="0.7"/><g fill="#17598f"><rect x="3.9" y="18.3" width="1.5" height="10.4"/><rect x="42.1" y="18.3" width="1.5" height="10.4"/><rect x="5" y="22.8" width="37.5" height="1.4"/><polygon points="5,23.5 15.8,20.8 15.8,26.2"/><polygon points="42.5,23.5 31.7,20.8 31.7,26.2"/></g><text x="24" y="18.6" font-family="Liberation Sans" font-weight="bold" font-size="19.5" fill="#17598f" textLength="27" lengthAdjust="spacingAndGlyphs" text-anchor="middle">1.0</text></svg>
<svg style="left:1306px;top:523px;" width="48" height="48" viewBox="0 0 48 48"><rect x="2.1" y="29.5" width="43.6" height="13.3" fill="#9db3c4"/><line x1="3.6" y1="29.5" x2="3.6" y2="35.8" stroke="#7f9cb3" stroke-width="0.7"/><line x1="6.2" y1="29.5" x2="6.2" y2="33.2" stroke="#7f9cb3" stroke-width="0.7"/><line x1="8.7" y1="29.5" x2="8.7" y2="33.2" stroke="#7f9cb3" stroke-width="0.7"/><line x1="11.2" y1="29.5" x2="11.2" y2="33.2" stroke="#7f9cb3" stroke-width="0.7"/><line x1="13.8" y1="29.5" x2="13.8" y2="33.2" stroke="#7f9cb3" stroke-width="0.7"/><line x1="16.4" y1="29.5" x2="16.4" y2="35.8" stroke="#7f9cb3" stroke-width="0.7"/><line x1="18.9" y1="29.5" x2="18.9" y2="33.2" stroke="#7f9cb3" stroke-width="0.7"/><line x1="21.4" y1="29.5" x2="21.4" y2="33.2" stroke="#7f9cb3" stroke-width="0.7"/><line x1="24.0" y1="29.5" x2="24.0" y2="33.2" stroke="#7f9cb3" stroke-width="0.7"/><line x1="26.6" y1="29.5" x2="26.6" y2="33.2" stroke="#7f9cb3" stroke-width="0.7"/><line x1="29.1" y1="29.5" x2="29.1" y2="35.8" stroke="#7f9cb3" stroke-width="0.7"/><line x1="31.6" y1="29.5" x2="31.6" y2="33.2" stroke="#7f9cb3" stroke-width="0.7"/><line x1="34.2" y1="29.5" x2="34.2" y2="33.2" stroke="#7f9cb3" stroke-width="0.7"/><line x1="36.8" y1="29.5" x2="36.8" y2="33.2" stroke="#7f9cb3" stroke-width="0.7"/><line x1="39.3" y1="29.5" x2="39.3" y2="33.2" stroke="#7f9cb3" stroke-width="0.7"/><line x1="41.9" y1="29.5" x2="41.9" y2="35.8" stroke="#7f9cb3" stroke-width="0.7"/><line x1="44.4" y1="29.5" x2="44.4" y2="33.2" stroke="#7f9cb3" stroke-width="0.7"/><g fill="#17598f"><rect x="3.9" y="18.3" width="1.5" height="10.4"/><rect x="42.1" y="18.3" width="1.5" height="10.4"/><rect x="5" y="22.8" width="37.5" height="1.4"/><polygon points="5,23.5 15.8,20.8 15.8,26.2"/><polygon points="42.5,23.5 31.7,20.8 31.7,26.2"/></g><path d="M23.9,12.9 C21.5,7.5 15.8,7.6 15.8,12.9 C15.8,18.2 21.5,18.3 23.9,12.9 C26.3,7.5 32,7.6 32,12.9 C32,18.2 26.3,18.3 23.9,12.9 Z" fill="none" stroke="#17598f" stroke-width="3.3"/></svg>
<svg style="left:16px;top:515px;" width="57" height="57" viewBox="0 0 57 57"><polygon points="48.8,4.2 7.3,28.2 48.8,52.2" fill="#17598f" stroke="#17598f" stroke-width="2.6" stroke-linejoin="round"/></svg>
<svg style="left:211px;top:515px;" width="57" height="57" viewBox="0 0 57 57"><polygon points="48.8,4.2 7.3,28.2 48.8,52.2" fill="#17598f" stroke="#17598f" stroke-width="2.6" stroke-linejoin="round"/></svg>
<svg style="left:411px;top:515px;" width="57" height="57" viewBox="0 0 57 57"><polygon points="48.8,4.2 7.3,28.2 48.8,52.2" fill="#17598f" stroke="#17598f" stroke-width="2.6" stroke-linejoin="round"/></svg>
<svg style="left:136px;top:515px;" width="57" height="57" viewBox="0 0 57 57"><polygon points="7.9,4.2 49.4,28.2 7.9,52.2" fill="#17598f" stroke="#17598f" stroke-width="2.6" stroke-linejoin="round"/></svg>
<svg style="left:331px;top:515px;" width="57" height="57" viewBox="0 0 57 57"><polygon points="7.9,4.2 49.4,28.2 7.9,52.2" fill="#17598f" stroke="#17598f" stroke-width="2.6" stroke-linejoin="round"/></svg>
<svg style="left:531px;top:515px;" width="57" height="57" viewBox="0 0 57 57"><polygon points="7.9,4.2 49.4,28.2 7.9,52.2" fill="#17598f" stroke="#17598f" stroke-width="2.6" stroke-linejoin="round"/></svg>
<div class="t" style="left:-195.5px;width:600px;text-align:center;top:497.20px;font-size:14.3px;line-height:14.3px;font-weight:normal;color:#1e1e1e;">Jog over speed,[%]</div>
<div class="t" style="left:-0.5px;width:600px;text-align:center;top:497.20px;font-size:14.3px;line-height:14.3px;font-weight:normal;color:#1e1e1e;">Over Speed,[%]</div>
<div class="t" style="left:-195.2px;width:600px;text-align:center;top:536.69px;font-size:17.5px;line-height:17.5px;font-weight:bold;color:#17598f;">245</div>
<div class="t" style="left:-0.5px;width:600px;text-align:center;top:536.69px;font-size:17.5px;line-height:17.5px;font-weight:bold;color:#17598f;">100</div>
<div class="t" style="left:200px;width:600px;text-align:center;top:495.84px;font-size:15.9px;line-height:15.9px;font-weight:normal;color:#1e1e1e;">Spindle Speed, [rpm]</div>
<div class="t" style="left:199.7px;width:600px;text-align:center;top:536.33px;font-size:16.5px;line-height:16.5px;font-weight:bold;color:#17598f;">10000</div>
<div class="t" style="right:655.5px;top:499.39px;font-size:14.9px;line-height:14.9px;font-weight:normal;color:#1e1e1e;">Tool Length, [mm]</div>
<div class="t" style="right:655.5px;top:523.89px;font-size:14.9px;line-height:14.9px;font-weight:normal;color:#1e1e1e;">Tool</div>
<div class="t" style="right:655.5px;top:548.39px;font-size:14.9px;line-height:14.9px;font-weight:normal;color:#1e1e1e;">Z correction, mm</div>
<div class="t" style="left:461.70000000000005px;width:600px;text-align:center;top:499.90px;font-size:14.3px;line-height:14.3px;font-weight:bold;color:#17598f;">146.958</div>
<div class="t" style="left:459.5px;width:600px;text-align:center;top:521.84px;font-size:18.5px;line-height:18.5px;font-weight:bold;color:#17598f;">T7</div>
<div class="t" style="left:463px;width:600px;text-align:center;top:548.90px;font-size:14.3px;line-height:14.3px;font-weight:bold;color:#17598f;">-0.007</div>
<svg style="left:824px;top:495px;" width="77" height="77" viewBox="0 0 77 77"><rect x="28" y="12" width="24.5" height="27.5" fill="#17598f"/><ellipse cx="40.25" cy="12" rx="12.25" ry="2.6" fill="#17598f" stroke="#3f86c4" stroke-width="0.8"/><ellipse cx="40.25" cy="39.5" rx="12.25" ry="2.6" fill="#17598f"/><path d="M28,12 V39.5 M52.5,12 V39.5" stroke="#3f86c4" stroke-width="0.8"/><ellipse cx="31.5" cy="23" rx="1.2" ry="2.5" fill="#fff"/><ellipse cx="31.5" cy="32" rx="1.2" ry="2.5" fill="#fff"/><polygon points="38,42 42.5,42 40.8,64 39.7,64" fill="#17598f"/><circle cx="40.25" cy="65" r="2.9" fill="#17598f"/></svg>
<svg style="left:908px;top:495px;" width="77" height="77" viewBox="0 0 77 77"><rect x="8" y="6.2" width="38.6" height="6.5" fill="#17598f"/><rect x="11.5" y="13.3" width="31" height="4.2" fill="#17598f"/><rect x="11" y="18.2" width="32" height="3.6" fill="#17598f"/><rect x="11.5" y="22.5" width="31" height="3" fill="#17598f"/><rect x="13.5" y="26" width="27" height="11" rx="2.5" fill="#17598f"/><circle cx="18" cy="29" r="0.9" fill="#fff"/><circle cx="26.8" cy="29" r="0.9" fill="#fff"/><circle cx="36" cy="29" r="0.9" fill="#fff"/><line x1="14" y1="32.5" x2="40" y2="32.5" stroke="#4a80b0" stroke-width="0.6"/><defs><linearGradient id="bit" x1="0" x2="1"><stop offset="0" stop-color="#111"/><stop offset="0.5" stop-color="#ddd"/><stop offset="1" stop-color="#222"/></linearGradient></defs><rect x="23.8" y="37" width="7" height="20.5" fill="url(#bit)"/><path d="M24,42 L31,38 M24,47 L31,43 M24,52 L31,48 M24,57 L31,53" stroke="#111" stroke-width="1.6"/><g stroke="#7b9cb6" stroke-width="1.1"><line x1="36.2" y1="37.9" x2="65.8" y2="37.9"/><line x1="36.2" y1="56.8" x2="65.8" y2="56.8"/><line x1="61" y1="22.4" x2="61" y2="34"/><line x1="61" y1="61" x2="61" y2="72.6"/></g><g fill="#7b9cb6"><polygon points="59,32 63,32 61,37"/><polygon points="59,62.5 63,62.5 61,57.5"/></g></svg>
<div class="t" style="right:1300.5px;top:649.22px;font-size:21px;line-height:21px;font-weight:bold;color:#17598f;letter-spacing:-0.6px">G-code</div>
<div class="t" style="right:1308.5px;top:690.80px;font-size:21.5px;line-height:21.5px;font-weight:bold;color:#17598f;">Mill</div>
<div class="t" style="right:1307.2px;top:732.72px;font-size:21px;line-height:21px;font-weight:bold;color:#17598f;letter-spacing:-0.3px">Log</div>
<div style="position:absolute;left:82px;top:640px;width:8px;height:39px;background:#a0a0a0"></div>
<div style="position:absolute;left:82px;top:682px;width:8px;height:40px;background:#a0a0a0"></div>
<div style="position:absolute;left:82px;top:724px;width:8px;height:39px;background:#a0a0a0"></div>
<svg style="left:101px;top:592px;" width="58" height="52" viewBox="0 0 58 52"><line x1="9" y1="2" x2="9" y2="50" stroke="#b9c3c9" stroke-width="0.6" stroke-dasharray="1.5 1.5"/><line x1="19" y1="2" x2="19" y2="50" stroke="#b9c3c9" stroke-width="0.6" stroke-dasharray="1.5 1.5"/><line x1="29" y1="2" x2="29" y2="50" stroke="#b9c3c9" stroke-width="0.6" stroke-dasharray="1.5 1.5"/><line x1="39" y1="2" x2="39" y2="50" stroke="#b9c3c9" stroke-width="0.6" stroke-dasharray="1.5 1.5"/><line x1="49" y1="2" x2="49" y2="50" stroke="#b9c3c9" stroke-width="0.6" stroke-dasharray="1.5 1.5"/><line x1="2" y1="9" x2="56" y2="9" stroke="#b9c3c9" stroke-width="0.6" stroke-dasharray="1.5 1.5"/><line x1="2" y1="19" x2="56" y2="19" stroke="#b9c3c9" stroke-width="0.6" stroke-dasharray="1.5 1.5"/><line x1="2" y1="29" x2="56" y2="29" stroke="#b9c3c9" stroke-width="0.6" stroke-dasharray="1.5 1.5"/><line x1="2" y1="39" x2="56" y2="39" stroke="#b9c3c9" stroke-width="0.6" stroke-dasharray="1.5 1.5"/><line x1="2" y1="49" x2="56" y2="49" stroke="#b9c3c9" stroke-width="0.6" stroke-dasharray="1.5 1.5"/><rect x="9" y="19" width="8.5" height="7.5" fill="#17598f"/><rect x="9" y="28" width="8.5" height="7.5" fill="#17598f"/><rect x="9" y="37" width="8.5" height="7.5" fill="#17598f"/><rect x="19" y="19" width="8.5" height="7.5" fill="#17598f"/><rect x="19" y="28" width="8.5" height="7.5" fill="#17598f"/><rect x="19" y="37" width="8.5" height="7.5" fill="#17598f"/><rect x="29" y="19" width="8.5" height="7.5" fill="#17598f"/><rect x="29" y="28" width="8.5" height="7.5" fill="#17598f"/><rect x="29" y="37" width="8.5" height="7.5" fill="#17598f"/></svg>
<svg style="left:101px;top:647px;" width="58" height="52" viewBox="0 0 58 52"><polygon points="3.9,40.2 52.4,23.3 55.2,31.7 6.6,48.6" fill="#9db3c4"/><line x1="4.5" y1="40.00" x2="5.3" y2="43.60" stroke="#7f9cb3" stroke-width="0.6"/><line x1="7.5" y1="38.96" x2="8.3" y2="41.26" stroke="#7f9cb3" stroke-width="0.6"/><line x1="10.6" y1="37.92" x2="11.4" y2="40.22" stroke="#7f9cb3" stroke-width="0.6"/><line x1="13.6" y1="36.88" x2="14.4" y2="39.18" stroke="#7f9cb3" stroke-width="0.6"/><line x1="16.7" y1="35.84" x2="17.5" y2="39.44" stroke="#7f9cb3" stroke-width="0.6"/><line x1="19.8" y1="34.80" x2="20.6" y2="37.10" stroke="#7f9cb3" stroke-width="0.6"/><line x1="22.8" y1="33.76" x2="23.6" y2="36.06" stroke="#7f9cb3" stroke-width="0.6"/><line x1="25.8" y1="32.72" x2="26.6" y2="35.02" stroke="#7f9cb3" stroke-width="0.6"/><line x1="28.9" y1="31.68" x2="29.7" y2="35.28" stroke="#7f9cb3" stroke-width="0.6"/><line x1="31.9" y1="30.64" x2="32.8" y2="32.94" stroke="#7f9cb3" stroke-width="0.6"/><line x1="35.0" y1="29.60" x2="35.8" y2="31.90" stroke="#7f9cb3" stroke-width="0.6"/><line x1="38.0" y1="28.56" x2="38.8" y2="30.86" stroke="#7f9cb3" stroke-width="0.6"/><line x1="41.1" y1="27.52" x2="41.9" y2="31.12" stroke="#7f9cb3" stroke-width="0.6"/><line x1="44.1" y1="26.48" x2="44.9" y2="28.78" stroke="#7f9cb3" stroke-width="0.6"/><line x1="47.2" y1="25.44" x2="48.0" y2="27.74" stroke="#7f9cb3" stroke-width="0.6"/><line x1="50.2" y1="24.40" x2="51.0" y2="26.70" stroke="#7f9cb3" stroke-width="0.6"/><polygon points="10.9,12 27.1,7.1 33.4,23.3 16.6,28.2" fill="#7599b4" stroke="#17598f" stroke-width="1.5" stroke-linejoin="round"/><path d="M6.3,18 A 11 11 0 0 1 14,7.5" fill="none" stroke="#17598f" stroke-width="1.5"/><path d="M31.5,26.8 A 11 11 0 0 0 38.8,18.5" fill="none" stroke="#17598f" stroke-width="1.5"/><polygon points="4,16.5 9.5,17.5 6.8,22" fill="#17598f"/><polygon points="36.5,19.5 41.5,19 39.5,14.5" fill="#17598f"/></svg>
<svg style="left:101px;top:702px;" width="58" height="52" viewBox="0 0 58 52"><rect x="25" y="4.1" width="28.8" height="3.8" fill="#17598f"/><rect x="27.8" y="8.4" width="23.9" height="3.4" fill="#17598f"/><rect x="27.3" y="12.3" width="24.9" height="2.8" fill="#17598f"/><rect x="27.8" y="15.5" width="23.9" height="2.5" fill="#17598f"/><rect x="29" y="18" width="21.5" height="6.5" rx="2" fill="#17598f"/><circle cx="32" cy="19.5" r="0.7" fill="#fff"/><circle cx="38.5" cy="19.5" r="0.7" fill="#fff"/><circle cx="45" cy="19.5" r="0.7" fill="#fff"/><rect x="36" y="27" width="3.5" height="10" fill="url(#bit)" transform="rotate(15 38 32)"/><g font-family="Liberation Sans" font-weight="bold" font-size="13" fill="#17598f"><text x="2.5" y="30.7" textLength="27.5" lengthAdjust="spacingAndGlyphs">Run</text><text x="2.5" y="41" textLength="32.5" lengthAdjust="spacingAndGlyphs">from</text><text x="2.5" y="50" textLength="32" lengthAdjust="spacingAndGlyphs">Here</text></g></svg>
<div style="position:absolute;left:170px;top:596px;width:560px;height:160px;box-sizing:border-box;border:1px solid #111;border-right:2px solid #111;border-bottom:2px solid #111;background:#d4d9d3"></div>
<div style="position:absolute;left:171px;top:717px;width:544px;height:20px;background:#979700"></div>
<div class="t" style="left:173.5px;top:600.53px;font-size:13.9px;line-height:13.9px;font-weight:bold;color:#111;">7: (TOOL 4 - DIA 3.)</div>
<div class="t" style="left:173.5px;top:620.53px;font-size:13.9px;line-height:13.9px;font-weight:bold;color:#111;">8: (TOOL 7 - DIA 1.)</div>
<div class="t" style="left:173.5px;top:640.53px;font-size:13.9px;line-height:13.9px;font-weight:bold;color:#111;">9: (TOOL 8 - DIA 3.175)</div>
<div class="t" style="left:173.5px;top:660.53px;font-size:13.9px;line-height:13.9px;font-weight:bold;color:#111;">10: (TOOL 9 - DIA 2.1)</div>
<div class="t" style="left:173.5px;top:680.53px;font-size:13.9px;line-height:13.9px;font-weight:bold;color:#111;">11:</div>
<div class="t" style="left:173.5px;top:700.53px;font-size:13.9px;line-height:13.9px;font-weight:bold;color:#111;">12:</div>
<div class="t" style="left:173.5px;top:720.53px;font-size:13.9px;line-height:13.9px;font-weight:bold;color:#fff;">13: N1 G90 G17 G40 G80 G00 G21</div>
<div class="t" style="left:173.5px;top:740.53px;font-size:13.9px;line-height:13.9px;font-weight:bold;color:#111;">14: G28 G91 Z0</div>
<div style="position:absolute;left:715px;top:597px;width:13px;height:14px;background:#e4e6e2;border-right:1px solid #888;border-bottom:1px solid #888;box-sizing:border-box"></div>
<div style="position:absolute;left:715px;top:612px;width:13px;height:26px;background:#e4e6e2;border-right:1px solid #888;border-bottom:1px solid #888;box-sizing:border-box"></div>
<div style="position:absolute;left:715px;top:740px;width:13px;height:14px;background:#e4e6e2;border-right:1px solid #888;border-bottom:1px solid #888;box-sizing:border-box"></div>
<svg style="left:715px;top:597px;" width="13" height="14" viewBox="0 0 13 14"><polygon points="3,9 10,9 6.5,5" fill="#222"/></svg>
<svg style="left:715px;top:740px;" width="13" height="14" viewBox="0 0 13 14"><polygon points="3,5 10,5 6.5,9" fill="#222"/></svg>
<svg style="left:741px;top:592px;" width="57" height="52" viewBox="0 0 57 52"><polygon points="27.7,12 41.9,35 13.9,35" fill="#17598f"/><polygon points="27.7,25.9 41.9,48.7 13.9,48.7" fill="#17598f"/><polyline points="14.6,35.2 27.7,25.3 40.8,35.2" fill="none" stroke="#86a9c5" stroke-width="1.2"/></svg>
<svg style="left:801px;top:592px;" width="57" height="52" viewBox="0 0 57 52"><polygon points="27.7,12 41.9,35 13.9,35" fill="#17598f"/><polygon points="27.7,25.9 41.9,48.7 13.9,48.7" fill="#17598f"/><polyline points="14.6,35.2 27.7,25.3 40.8,35.2" fill="none" stroke="#86a9c5" stroke-width="1.2"/><text x="54" y="18" font-family="Liberation Sans" font-weight="bold" font-size="19" fill="#17598f" textLength="22" lengthAdjust="spacingAndGlyphs" text-anchor="end">10</text></svg>
<svg style="left:741px;top:647px;" width="57" height="52" viewBox="0 0 57 52"><polygon points="13.9,15.6 41.9,15.6 27.7,38.2" fill="#17598f"/><polygon points="13.9,1.7 41.9,1.7 27.7,25" fill="#17598f"/><polyline points="14.6,15.4 27.7,25.6 40.8,15.4" fill="none" stroke="#86a9c5" stroke-width="1.2"/></svg>
<svg style="left:801px;top:647px;" width="57" height="52" viewBox="0 0 57 52"><polygon points="13.9,17.1 41.9,17.1 27.7,39.7" fill="#17598f"/><polygon points="13.9,3.2 41.9,3.2 27.7,26.5" fill="#17598f"/><polyline points="14.6,16.9 27.7,27.1 40.8,16.9" fill="none" stroke="#86a9c5" stroke-width="1.2"/><text x="54" y="50" font-family="Liberation Sans" font-weight="bold" font-size="19" fill="#17598f" textLength="22" lengthAdjust="spacingAndGlyphs" text-anchor="end">10</text></svg>
<div class="t" style="left:890px;top:609.03px;font-size:14.5px;line-height:14.5px;font-weight:normal;color:#262626;">Total Lines</div>
<div class="t" style="left:890px;top:638.73px;font-size:14.5px;line-height:14.5px;font-weight:normal;color:#262626;">Current Line</div>
<div class="t" style="left:890px;top:698.73px;font-size:14.5px;line-height:14.5px;font-weight:normal;color:#262626;">Time Elapsed</div>
<div class="t" style="left:890px;top:728.73px;font-size:14.5px;line-height:14.5px;font-weight:normal;color:#262626;">Time Estimated</div>
<div class="t" style="right:270px;top:607.36px;font-size:18px;line-height:18px;font-weight:bold;color:#17598f;">1008</div>
<div class="t" style="right:270px;top:637.06px;font-size:18px;line-height:18px;font-weight:bold;color:#17598f;">12</div>
<div class="t" style="right:270px;top:697.06px;font-size:18px;line-height:18px;font-weight:bold;color:#17598f;">00:00:00</div>
<div class="t" style="right:270px;top:727.06px;font-size:18px;line-height:18px;font-weight:bold;color:#17598f;">00:15:47</div>
<div style="position:absolute;left:890px;top:661px;width:220px;height:20px;box-sizing:border-box;background:#fff;border:1px solid #aaa;border-radius:2px"></div>
<div style="position:absolute;left:891px;top:662px;width:2px;height:18px;background:#17598f"></div>
<div class="t" style="left:700px;width:600px;text-align:center;top:665.00px;font-size:13px;line-height:13px;font-weight:normal;color:#222;">1%</div>
<svg style="left:1156px;top:597px;" width="62" height="62" viewBox="0 0 62 62"><rect x="5.9" y="5.9" width="8.6" height="49.5" rx="1.5" fill="#17598f"/><polygon points="14.5,30.8 55.6,7.5 55.6,55.4" fill="#17598f" stroke="#17598f" stroke-width="1.8" stroke-linejoin="round"/></svg>
<svg style="left:1223px;top:597px;" width="62" height="62" viewBox="0 0 62 62"><path d="M15,52.5 H37 A 15 15 0 0 0 37,22.5 H30" fill="none" stroke="#17598f" stroke-width="7.6"/><polygon points="9.2,22.7 32,8.2 32,37.1" fill="#17598f" stroke="#17598f" stroke-width="1" stroke-linejoin="round"/></svg>
<svg style="left:1290px;top:597px;" width="62" height="62" viewBox="0 0 62 62"><rect x="4.6" y="7.5" width="8" height="48.7" rx="1.5" fill="#17598f"/><polygon points="18.3,7.5 59.3,31.8 18.3,55.4" fill="#17598f" stroke="#17598f" stroke-width="1.8" stroke-linejoin="round"/></svg>
<svg style="left:1257px;top:663px;" width="96" height="96" viewBox="0 0 96 96"><polygon points="11,6.5 82,47 11,87" fill="#17598f" stroke="#17598f" stroke-width="5" stroke-linejoin="round"/></svg>
<svg style="left:1157px;top:663px;" width="96" height="96" viewBox="0 0 96 96"><defs><linearGradient id="stp" x1="0" y1="0" x2="0" y2="1"><stop offset="0" stop-color="#7a0000"/><stop offset="0.45" stop-color="#c01010"/><stop offset="1" stop-color="#e81010"/></linearGradient></defs><polygon points="30.974899999999998,7.399999999999999 64.52510000000001,7.399999999999999 88.25,31.124899999999997 88.25,64.6751 64.52510000000001,88.4 30.974899999999998,88.4 7.25,64.6751 7.25,31.124899999999997" fill="#a00000"/><polygon points="31.88614,9.600000000000001 63.61386,9.600000000000001 86.05,32.03614 86.05,63.763859999999994 63.61386,86.19999999999999 31.88614,86.19999999999999 9.450000000000003,63.763859999999994 9.450000000000003,32.03614" fill="#ff2020"/><polygon points="32.50744,11.100000000000001 62.99256,11.100000000000001 84.55,32.65744 84.55,63.142559999999996 62.99256,84.69999999999999 32.50744,84.69999999999999 10.950000000000003,63.142559999999996 10.950000000000003,32.65744" fill="#fff"/><polygon points="33.170159999999996,12.699999999999996 62.329840000000004,12.699999999999996 82.95,33.32016 82.95,62.479839999999996 62.329840000000004,83.1 33.170159999999996,83.1 12.549999999999997,62.479839999999996 12.549999999999997,33.32016" fill="url(#stp)"/><path d="M14,50 Q48,28 82,45 V33 L62,13 H34 L14,33 Z" fill="#fff" opacity="0.1"/><text x="47.75" y="58.3" text-anchor="middle" font-family="Liberation Sans" font-weight="bold" font-size="27" fill="#fff" textLength="62" lengthAdjust="spacingAndGlyphs">STOP</text></svg>
</div>
</body></html>
